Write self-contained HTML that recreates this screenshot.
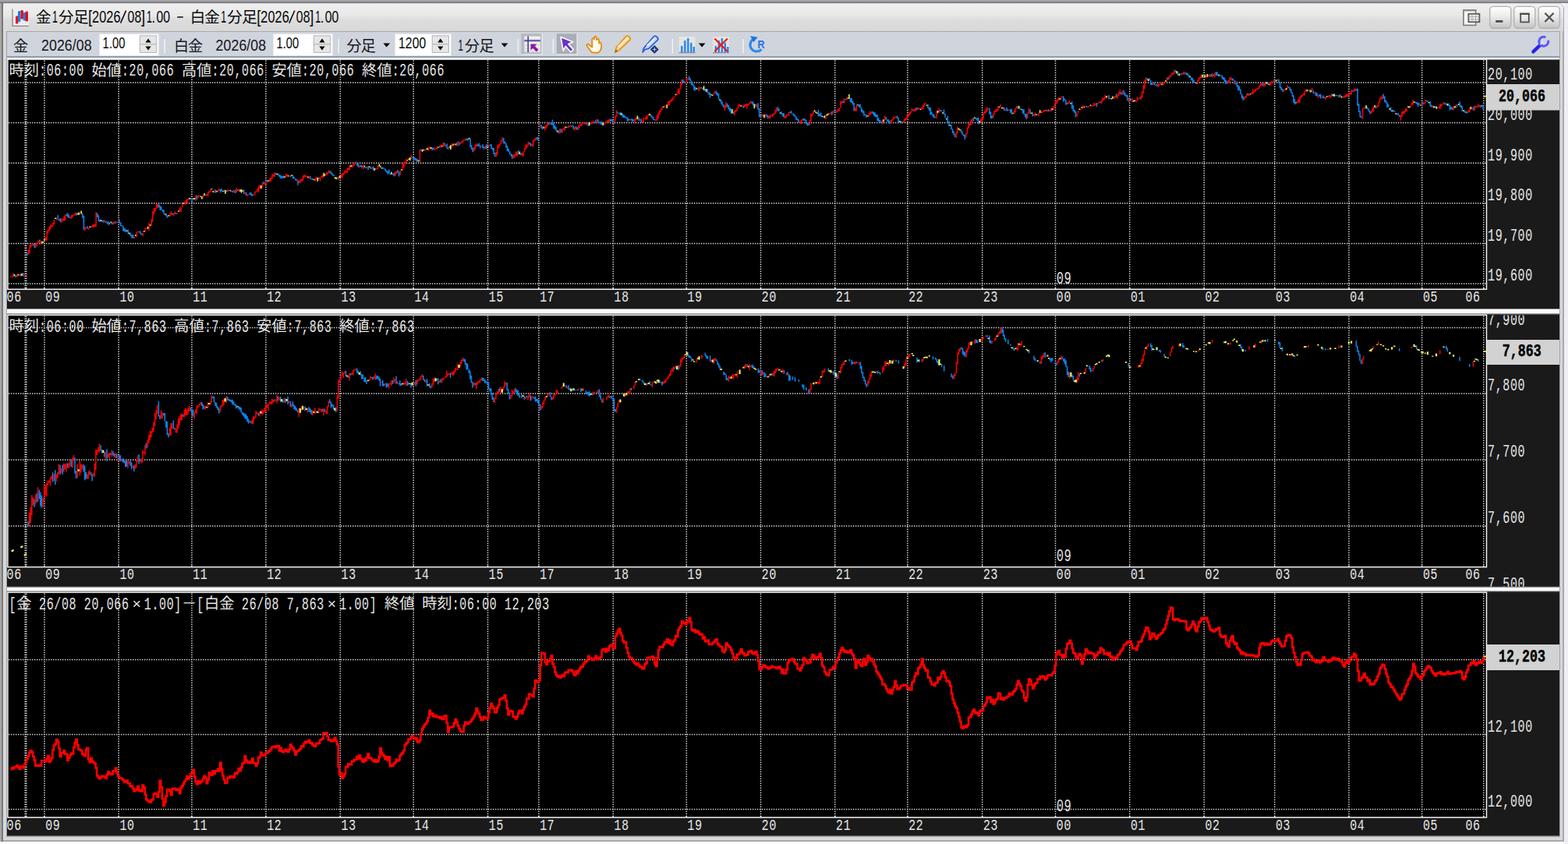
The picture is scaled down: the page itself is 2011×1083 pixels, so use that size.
<!DOCTYPE html>
<html lang="ja"><head><meta charset="utf-8"><title>金1分足[2026/08]1.00 - 白金1分足[2026/08]1.00</title>
<style>
html,body{margin:0;padding:0}
body{width:2011px;height:1083px;position:relative;overflow:hidden;background:#fff;font-family:"Liberation Sans",sans-serif}
div{position:absolute;box-sizing:border-box}
#outer{left:2006px;top:4px;width:5px;height:1079px;background:#eeeef4}
#topband{left:0;top:0;width:2011px;height:4px;background:linear-gradient(#a3a3aa 0,#a3a3aa 52%,#7c7c80 68%,#767678 100%)}
#win{left:0;top:4px;width:2006px;height:1076px;background:#d8d8d8;border-radius:0 7px 0 0;border-right:2px solid #a9a9a9;border-bottom:2px solid #a9a9a9;border-top:0}
#lb0{left:0;top:4px;width:2px;height:1076px;background:#a8a8a8}
#lb1{left:2px;top:3px;width:2px;height:1077px;background:#787878}
#lb2{left:7.500px;top:40px;width:1.500px;height:1034px;background:#a4a4a4}
#rb2{left:1999.500px;top:40px;width:1.600px;height:1034px;background:#a4a4a4}
#bb2{left:8px;top:1072.600px;width:1993px;height:1.600px;background:#a4a4a4}
#title{left:3.500px;top:4.500px;width:2001px;height:35px;background:linear-gradient(#efefef 0,#e8e8e8 42%,#dddddd 58%,#d8d8d8 100%);border-radius:4px 5px 0 0}
#tline{left:8px;top:39.600px;width:1993px;height:1.400px;background:#a8a8a8}
#tool{left:9px;top:41px;width:1991px;height:31.400px;background:#d0d4dc}
#tool2{left:9px;top:72.400px;width:1991px;height:1.800px;background:#8e9cb0}
.gap{left:9px;width:1991px;background:#fafafa;border-top:0.600px solid #9a9a9a;border-bottom:1.100px solid #9c9c9c}
</style></head><body>
<div id="outer"></div>
<div id="win"></div><div id="topband"></div><div id="lb0"></div><div id="lb1"></div>
<div id="title"></div><div id="tline"></div><div id="tool"></div><div id="tool2"></div>
<div id="lb2"></div><div id="rb2"></div><div id="bb2"></div>
<div class="gap" style="top:395.800px;height:7.500px"></div><div class="gap" style="top:752.600px;height:6.800px"></div>
<svg width="2011" height="1083" viewBox="0 0 2011 1083" style="position:absolute;left:0;top:0" role="img"><desc>時刻:06:00 始値:20,066 高値:20,066 安値:20,066 終値:20,066 / 時刻:06:00 始値:7,863 高値:7,863 安値:7,863 終値:7,863 / [金 26/08 20,066×1.00]－[白金 26/08 7,863×1.00] 終値 時刻:06:00 12,203</desc><rect x="9" y="75.2" width="1991" height="320.8" fill="#1a1a1a"/><rect x="9" y="74.200" width="1991" height="2.300" fill="#f6f6f6"/><rect x="9.900" y="76.1" width="1896.6" height="295.1" fill="#000" stroke="#f2f2f2" stroke-width="1.500"/><rect x="9" y="403.3" width="1991" height="349.5" fill="#1a1a1a"/><rect x="9.900" y="404.2" width="1896.6" height="323.4" fill="#000" stroke="#f2f2f2" stroke-width="1.500"/><rect x="9" y="759.2" width="1991" height="313.4" fill="#1a1a1a"/><rect x="9.900" y="760.1" width="1896.6" height="288.8" fill="#000" stroke="#f2f2f2" stroke-width="1.500"/><path d="M57 77.4V371M152.2 77.4V371M246 77.4V371M341 77.4V371M436.4 77.4V371M530.3 77.4V371M625.6 77.4V371M691 77.4V371M786.4 77.4V371M880.4 77.4V371M975.6 77.4V371M1070.9 77.4V371M1164 77.4V371M1259.8 77.4V371M1353.6 77.4V371M1448.8 77.4V371M1544.3 77.4V371M1634.8 77.4V371M1730 77.4V371M1823.7 77.4V371M1902.8 77.4V371M32.2 77.4V371M33.8 77.4V371M11 106H1906M11 157.6H1906M11 209.2H1906M11 260.8H1906M11 312.4H1906M11 364H1906M57 405.5V727.4M152.2 405.5V727.4M246 405.5V727.4M341 405.5V727.4M436.4 405.5V727.4M530.3 405.5V727.4M625.6 405.5V727.4M691 405.5V727.4M786.4 405.5V727.4M880.4 405.5V727.4M975.6 405.5V727.4M1070.9 405.5V727.4M1164 405.5V727.4M1259.8 405.5V727.4M1353.6 405.5V727.4M1448.8 405.5V727.4M1544.3 405.5V727.4M1634.8 405.5V727.4M1730 405.5V727.4M1823.7 405.5V727.4M1902.8 405.5V727.4M32.2 405.5V727.4M33.8 405.5V727.4M11 420.5H1906M11 505H1906M11 590H1906M11 675H1906M57 761.4V1048.7M152.2 761.4V1048.7M246 761.4V1048.7M341 761.4V1048.7M436.4 761.4V1048.7M530.3 761.4V1048.7M625.6 761.4V1048.7M691 761.4V1048.7M786.4 761.4V1048.7M880.4 761.4V1048.7M975.6 761.4V1048.7M1070.9 761.4V1048.7M1164 761.4V1048.7M1259.8 761.4V1048.7M1353.6 761.4V1048.7M1448.8 761.4V1048.7M1544.3 761.4V1048.7M1634.8 761.4V1048.7M1730 761.4V1048.7M1823.7 761.4V1048.7M1902.8 761.4V1048.7M32.2 761.4V1048.7M33.8 761.4V1048.7M11 846.4H1906M11 942.5H1906M11 1038.6H1906" stroke="#cdcdcd" stroke-width="1.500" stroke-dasharray="1.500 1.500" fill="none"/><path d="M57 369v2M152.2 369v2M246 369v2M341 369v2M436.4 369v2M530.3 369v2M625.6 369v2M691 369v2M786.4 369v2M880.4 369v2M975.6 369v2M1070.9 369v2M1164 369v2M1259.8 369v2M1353.6 369v2M1448.8 369v2M1544.3 369v2M1634.8 369v2M1730 369v2M1823.7 369v2M1902.8 369v2M33 369v2" stroke="#f2f2f2" stroke-width="1.300"/><path d="M57 725.4v2M152.2 725.4v2M246 725.4v2M341 725.4v2M436.4 725.4v2M530.3 725.4v2M625.6 725.4v2M691 725.4v2M786.4 725.4v2M880.4 725.4v2M975.6 725.4v2M1070.9 725.4v2M1164 725.4v2M1259.8 725.4v2M1353.6 725.4v2M1448.8 725.4v2M1544.3 725.4v2M1634.8 725.4v2M1730 725.4v2M1823.7 725.4v2M1902.8 725.4v2M33 725.4v2" stroke="#f2f2f2" stroke-width="1.300"/><path d="M57 1046.7v2M152.2 1046.7v2M246 1046.7v2M341 1046.7v2M436.4 1046.7v2M530.3 1046.7v2M625.6 1046.7v2M691 1046.7v2M786.4 1046.7v2M880.4 1046.7v2M975.6 1046.7v2M1070.9 1046.7v2M1164 1046.7v2M1259.8 1046.7v2M1353.6 1046.7v2M1448.8 1046.7v2M1544.3 1046.7v2M1634.8 1046.7v2M1730 1046.7v2M1823.7 1046.7v2M1902.8 1046.7v2M33 1046.7v2" stroke="#f2f2f2" stroke-width="1.300"/><path d="M19.99 352.76v3.13M26.31 351.46v3.08M29.46 350.31v4.01M34.81 324.74v3.37M42.7 313.34v1.42M44.28 313.12v4.94M50.6 307.56v3.3M74.28 275.92v5.9M75.86 281.23v1.75M77.44 279.98v5.03M85.34 274.65v2.72M86.92 273.29v5.54M88.49 275.82v4.22M97.97 272.83v3.57M105.86 273.77v5.9M107.44 276.71v18.17M112.18 290.24v3.5M116.92 290v1.68M124.81 273.56v5.27M126.39 276.13v7.86M127.97 281.59v3.74M131.13 282.67v1.98M132.71 282.56v3.01M135.86 283.83v1.44M137.44 284.28v2.69M139.02 284.23v4.52M143.76 284.7v3.37M146.92 284.42v2.68M150.08 284.81v1.3M153.23 281.53v5.12M154.81 285.23v4.96M156.39 289.1v1.3M157.97 289.75v6.67M159.55 292.47v4.48M161.13 293.81v4.33M164.29 294.53v5.61M167.44 298.64v4.68M169.02 301.58v3.9M170.6 301.04v4.92M178.5 296.89v1.3M180.08 296.48v4.11M181.66 299.54v2.26M203.76 261.84v4.45M205.34 263.72v6.25M206.92 265.37v4.05M208.5 269.04v2.53M210.08 269.23v5.26M213.24 273.84v3.81M214.81 276.29v3.51M221.13 273.13v2.55M225.87 273.22v1.88M244.82 254.03v2.02M246.39 255.35v5.95M252.71 250.68v5.12M263.76 249.5v1.53M271.66 241.36v2.53M276.4 243.3v4.29M282.71 242.64v4.59M284.29 241.99v3.33M287.45 243.75v2.28M290.61 244.19v2.27M296.92 244.62v1.3M298.5 245.09v1.83M301.66 243.69v4.25M304.82 242.88v2.1M312.71 243.34v5.69M315.87 246.76v4.31M320.61 246.87v3M322.19 247.36v3.82M323.77 249.01v2.67M337.98 232.93v3.49M342.71 231v2.67M353.77 221.65v2.4M356.92 222.49v3.04M358.5 224.02v3.22M360.08 225.09v3.86M361.66 225.99v2.9M363.24 225.27v3.38M372.71 225.27v2M375.87 225.28v4.19M377.45 227.26v2.07M379.03 228.97v3.03M382.19 231.27v6.3M397.98 226.02v3.66M399.56 229.03v1.3M401.14 228.73v2.38M409.03 227.66v1.93M423.24 219.24v3.18M424.82 220.47v3.11M426.4 222.18v3.15M427.98 223.95v2.27M432.72 227.31v2.15M457.98 208.13v4.71M459.56 210.05v4.34M462.72 211.43v2.81M464.3 212.76v2.19M469.03 213.92v2.25M472.19 212.93v5.41M475.35 214.06v2.81M478.51 213.15v4.31M481.67 216.04v1.88M491.14 214.59v2.2M492.72 215.95v1.63M494.3 216.46v3.55M495.88 218.58v2.96M497.46 219.33v4.72M499.03 217.55v4.83M500.61 221.72v2.45M503.77 223.03v1.3M505.35 221.87v4.34M510.09 217.93v4.18M511.67 220.42v5.96M529.04 201.82v1.3M530.61 201.68v3.97M532.19 202.21v3.18M533.77 203.31v3.89M535.35 203.93v3.72M540.09 191.43v2.08M554.3 189.29v3.78M555.88 189.29v2.74M563.77 187v2.17M570.09 183.37v4.12M573.25 184.35v6.32M574.83 189.62v2.11M585.88 182.69v4.41M589.04 182.34v3.88M598.51 177.82v2.08M600.09 177.62v3.18M603.25 177.61v11.72M604.83 186.35v5.69M606.41 189.73v5.59M612.72 185.29v2.53M614.3 183.46v4.3M615.88 186.39v4.09M619.04 185.24v4.69M620.62 188.02v3.51M623.78 185.28v6.14M628.51 185.6v1.3M630.09 184.9v6.13M631.67 189.22v3.46M633.25 190.1v8.01M634.83 195.9v5.46M645.88 176.65v7.27M647.46 181.43v3.14M649.04 183.53v5.85M650.62 186.92v6.94M652.2 190.77v4.1M653.78 194.23v3.7M655.36 197.36v3.1M656.93 197.96v5.71M664.83 192.65v5.63M667.99 196.59v2.55M679.04 182.82v2.7M680.62 183.81v3.86M688.51 176.04v3.3M690.09 175.97v4.3M694.27 160.03v4.6M695.85 161.9v4.43M703.74 157.1v3.12M706.9 157.38v2.59M708.48 153.54v6.84M710.06 158.07v7.19M711.64 160.58v5.25M713.22 162.99v5.14M716.38 167.59v3.44M719.53 165.3v4.78M727.43 162.44v1.3M733.74 160.86v1.71M735.32 161.2v4.18M738.48 162.15v3.37M740.06 163.14v3.52M751.11 156.85v2.77M754.27 157.36v4.46M762.17 156.7v1.3M763.75 154.17v3.84M766.9 153.15v4.67M768.48 156.56v1.3M770.06 156.28v3.53M771.64 155.52v4.6M782.69 153.04v2.76M784.27 152.83v2.55M785.85 154.12v4.51M792.17 143.37v2.16M793.75 145.07v1.3M795.33 143.7v4.31M798.48 145.48v5.09M800.06 147.3v3.86M801.64 148.5v2.82M803.22 150.04v1.84M804.8 150.6v5.41M806.38 152.34v2.15M809.54 152.4v2.03M811.12 152.53v4.13M812.69 153.17v2.11M819.01 150.2v4.82M822.17 152.41v4.37M834.8 147.23v2.66M836.38 148.48v3.15M837.96 150.25v3.77M839.54 153.07v1.3M875.85 101.74v3.67M877.43 103.75v3.05M883.75 97.67v4.72M885.33 100.52v3.75M886.91 103.61v5.75M888.49 106.92v3.36M890.07 109.34v6.33M891.64 111.13v5.22M894.8 113.19v2.02M899.54 112.09v1.42M901.12 112.38v2.33M904.28 113.78v3.1M907.43 114.18v4.96M909.01 118.32v3.2M910.59 118.69v6.87M918.49 116.48v4.66M920.07 118.84v3.91M921.65 120.25v7.56M924.8 128.07v4.64M926.38 130.43v5.18M927.96 133.97v4.16M932.7 132.84v4.33M934.28 135.11v5.27M935.86 137.86v5.26M937.44 139.04v6.66M940.59 142.86v3.02M953.23 135.38v3.01M964.28 130.23v3.06M965.86 130.51v5.03M969.02 133.87v2.93M972.17 132.23v8.45M973.75 138.94v10.96M975.33 147.63v2.93M978.49 147.35v1.91M983.23 146.58v3.14M984.81 147.68v4.45M997.44 137.37v4.94M999.02 139.36v3.45M1002.17 143.33v3.62M1003.75 145.34v3.8M1005.33 145.27v5.26M1013.23 143.23v1.78M1014.81 142.31v3.32M1016.39 145.43v1.3M1017.96 145.77v3.02M1019.54 147.36v3.11M1021.12 149.56v4.52M1022.7 152.08v2.53M1024.28 153.15v4.71M1030.6 152v2.61M1032.18 152.32v2.9M1033.75 153.84v5.5M1035.33 157.07v4M1036.91 157.88v2.75M1049.54 140.98v8.3M1051.12 145.67v3.57M1052.7 144.41v5.05M1055.86 148.88v2.18M1066.91 143.04v4.78M1070.07 141.94v1.53M1071.65 142.82v2.03M1081.12 129.53v2.37M1084.28 127.04v1.3M1090.6 125.49v5.48M1092.18 125.91v5.97M1093.76 129.41v5.15M1095.34 132.08v10.47M1101.65 134.18v3.39M1103.23 133.54v4.87M1104.81 137.72v6.13M1106.39 140.84v4.25M1107.97 142.48v6.39M1109.55 146.65v1.61M1111.13 146.93v4.08M1119.02 142.66v3.22M1120.6 143.83v4.46M1122.18 144.21v5.89M1123.76 146.61v3.51M1125.34 147.23v7.65M1126.92 151.45v4.58M1128.49 153.99v4.09M1130.07 155.67v2.39M1136.39 150.01v3.74M1137.97 153.24v2.73M1139.55 153.23v4.43M1141.13 155.01v3.91M1150.6 148.38v3.81M1152.18 150.87v6.03M1155.34 154.92v3.37M1156.92 156.18v2.19M1171.13 140.41v1.78M1175.86 138.12v3.4M1190.08 133.72v5.45M1191.65 137.87v4.16M1193.23 138.1v9.14M1194.81 143.17v4.02M1196.39 146.22v3.53M1197.97 146.73v4.66M1199.55 149.83v1.44M1205.87 141.15v1.94M1207.44 141.55v1.34M1210.6 140.58v6.17M1212.18 145.63v5.39M1215.34 148.82v9.14M1216.92 155.55v6.34M1220.08 160.35v5.89M1221.66 165.25v5.47M1223.23 168.61v4.68M1224.81 171.63v4.26M1232.71 166.45v3.82M1234.29 168.83v4.16M1235.87 172.15v2.49M1237.45 172.96v5.96M1248.5 151.01v4.2M1251.66 150.63v2.55M1253.24 151.56v3.19M1254.81 150.8v8.56M1269.03 138.71v7.9M1270.6 143.15v8.83M1272.18 148.42v3.66M1287.97 138.06v3.98M1291.13 137.63v4.97M1292.71 140.24v2.01M1295.87 139.92v4.89M1297.45 139.83v6.61M1305.34 136.1v3.63M1308.5 138.54v1.86M1311.66 140.01v5.44M1313.24 140.59v5.82M1314.82 145.7v4.77M1316.4 145.95v7.02M1321.13 140.34v5.45M1324.29 143.71v5.5M1330.61 146.51v1.3M1341.66 140.92v2.05M1344.82 140.18v3.16M1363.77 123.46v7.13M1365.34 126.36v2.27M1366.92 128.12v6.55M1368.5 131.62v2.07M1374.82 130.18v9.24M1376.4 135.23v7.65M1377.98 140.85v3.96M1379.56 142.4v7.78M1393.77 136.01v1.99M1406.4 132.05v4.9M1411.14 130.46v1.69M1422.19 121.95v5.26M1423.77 125.7v1.3M1431.66 120.61v4.46M1437.98 118.02v3.41M1441.14 115.45v5.75M1442.72 118.81v4.11M1444.29 121.39v2.94M1445.87 121.87v7.37M1449.03 126.16v3.82M1450.61 126.61v2.24M1461.66 125.05v1.81M1471.14 99.91v2.8M1474.3 100.17v3.4M1475.87 103.12v5.87M1477.45 106.2v3.11M1480.61 105.6v3.68M1482.19 108.43v1.32M1483.77 107.79v2.94M1497.98 98.94v3.55M1507.45 90.03v2.76M1510.61 91.87v4.89M1513.77 94.18v2.2M1518.51 92.54v3.01M1521.67 92.96v3.24M1523.24 93.98v3M1524.82 95.73v3.95M1527.98 99.16v4.19M1529.56 99.91v5.9M1531.14 102.58v3.78M1532.72 105.18v1.74M1543.77 95.54v2.59M1550.09 96.45v1.6M1553.25 94.95v3.6M1556.4 95.45v2.35M1559.56 92.05v4.84M1561.14 92.43v4.43M1564.3 95.59v2.36M1565.88 96.44v1.39M1567.46 96.65v4.57M1569.04 98.73v3.86M1570.61 99.8v5.12M1572.19 102.39v5.57M1573.77 104.54v2.2M1580.09 100.35v3.03M1581.67 101.36v2.03M1583.25 103.14v4.52M1586.4 105.48v5.93M1587.98 109.19v6.59M1589.56 110.45v5.69M1591.14 114.65v6.48M1592.72 120.48v5.75M1594.3 123.29v5.58M1600.62 119.45v3.05M1619.56 105.9v4.58M1625.88 105.61v2.87M1635.35 102.28v2.87M1640.09 101.72v4.87M1641.67 104.96v8.61M1643.25 111.6v4.14M1644.83 113.81v4.26M1652.72 110.93v1.9M1654.3 112.09v4.17M1655.88 114.25v5M1657.46 118.35v5.86M1659.04 122.23v9.65M1660.62 127.53v6.71M1679.57 115.15v2.78M1684.3 116.01v3.92M1687.46 118v5.21M1689.04 119.14v4.26M1692.2 120.94v2.95M1693.78 120.64v5.9M1696.93 122.29v3.85M1698.51 124.28v1.55M1707.99 120.02v3.86M1712.72 121.81v1.4M1714.3 121.94v1.37M1717.46 121.66v3.47M1719.04 121.28v3.33M1734.83 116v1.53M1739.57 113.88v2.56M1741.15 113.87v22.19M1742.73 133.33v10.33M1744.3 142.27v8.13M1745.88 149.02v2.23M1753.78 137.4v2.97M1755.36 139.16v3.97M1756.94 141.99v4.19M1764.83 136.82v2.11M1774.31 120.57v5.95M1775.88 123.6v7.58M1777.46 128.55v3.83M1779.04 131.25v6.39M1780.62 133.97v3.82M1783.78 137.45v4.97M1786.94 141.11v2.25M1788.52 141.95v1.75M1791.67 145.84v1.3M1793.25 144.65v3M1794.83 147.29v2.66M1815.36 130.82v1.6M1816.94 130.95v2.83M1818.52 131.58v5.47M1820.1 132.22v2.65M1824.83 130.58v3.31M1829.57 128.41v1.71M1831.15 129.27v2.28M1834.31 130.11v6.71M1835.89 134.56v2.89M1840.62 135.96v2.38M1843.78 137.49v1.3M1853.26 131.5v2.86M1854.83 132.88v1.63M1857.99 132.71v3.56M1859.57 134.76v6.87M1861.15 137.08v3.07M1862.73 137.59v3.73M1869.05 134.54v2.04M1872.2 130.2v6.49M1873.78 134.84v3.4M1875.36 136.05v6.89M1878.52 141.47v3.35M1880.1 142.97v1.95M1881.68 143.1v2.56M1889.57 137.16v4.58M1892.73 136.48v1.74M1899.05 134.69v3.22M1902.2 134.67v6.07" stroke="#0a84f0" stroke-width="1.550" fill="none"/><path d="M13.67 354.48v1.3M15.25 354.16v1.3M16.83 351.1v4.69M21.57 352.19v3.61M24.73 350.95v3.06M31.04 350.48v4.78M36.39 320.2v6.65M37.97 314.5v10.86M39.55 314.07v3.43M41.12 311.45v3.66M45.86 311.16v6.7M47.44 311.14v4.37M49.02 308.34v3.65M52.18 308.6v4.96M58.49 304.31v4.17M60.07 296.36v12.3M61.65 294.6v5.19M63.23 290.62v5.55M64.81 288.37v6.04M66.39 289.12v2.37M67.97 285.6v4.88M69.55 281.21v6.72M72.7 279.37v2.99M79.02 280.27v5.83M80.6 280.81v2.84M82.18 277.26v5.89M83.76 274.92v7.72M90.07 278.24v1.65M91.65 275.77v5.07M93.23 275.58v3.19M94.81 275.07v1.79M96.39 273.36v2.82M102.71 272.22v2.65M109.02 290.88v5.13M110.6 291.2v1.57M113.76 292.3v2.32M118.5 288.65v3.13M120.07 287.51v4.28M121.65 287.47v3.87M123.23 272.04v18.64M134.29 282.13v3.67M145.34 284.6v3.75M148.5 283.54v3.26M151.65 283.59v1.64M172.18 303.87v2.19M175.34 297.53v6.65M176.92 296.43v2.03M183.23 298.72v4.24M186.39 292.06v5.19M187.97 292.7v1.3M191.13 285.96v10M194.29 281.16v8.19M195.87 270.97v13.76M197.45 266.88v8.38M199.02 266.9v4.48M200.6 261.25v6.83M202.18 261.72v4.92M217.97 273.52v4.24M219.55 271.37v4.64M222.71 273.83v3.37M224.29 271.03v3.78M227.45 273.1v1.65M230.6 266.04v5.57M232.18 266.03v5.68M233.76 261.17v4.95M236.92 258.46v3.28M238.5 256.55v5.97M240.08 255.16v4.85M241.66 254.18v2.36M251.13 250.2v7.56M254.29 250.43v3.5M255.87 250.74v1.3M260.61 249.79v3.34M265.34 248.92v2.66M266.92 245.68v6.43M268.5 244.64v2.91M270.08 242.3v3.79M274.82 244.01v3.4M279.55 243.76v2.7M281.13 241.81v2.89M292.19 242.76v3.57M293.76 243.88v1.41M300.08 243.52v3.37M303.24 240.64v6.33M306.4 242.13v3.7M314.29 246.79v2.55M317.45 249.31v2.64M319.03 248.78v1.3M325.34 249.31v1.47M326.92 245.78v4.67M328.5 244.67v2.13M330.08 241.84v3.79M331.66 238.62v8.58M333.24 237.42v4.38M336.4 234.51v6.5M339.56 233.99v2.75M341.13 231.7v5.22M345.87 228.73v4.83M347.45 227.68v4.96M349.03 223.24v6.8M350.61 223.56v3.31M352.19 221.17v5.82M366.4 223.33v4.58M367.98 223.42v2.8M371.14 225.32v1.3M380.61 229.24v3.4M383.77 232.17v2.47M385.35 230.16v4.51M386.93 229.44v3.26M388.5 225.37v6.54M390.08 224.32v4.22M391.66 224.53v2.7M393.24 225.38v1.3M396.4 225.77v3.46M404.29 228.48v3.69M405.87 226.6v4.61M410.61 227.55v4.61M412.19 225.54v2.25M413.77 223.86v4.77M418.51 221.22v3.64M420.08 220.81v3.27M421.66 218.34v4.27M434.3 226.31v4.67M437.45 223.71v3.82M439.03 222.56v5.78M440.61 221.28v3.66M442.19 218.43v4.6M443.77 219.03v2.13M445.35 215.8v6.2M446.93 214.87v3.5M448.51 212.11v6.17M451.66 211.29v3.62M453.24 211.37v2.08M454.82 208.43v3.9M456.4 207.2v2.27M461.14 211.99v2.94M465.88 211.48v5.45M470.61 213.67v2.43M476.93 214.21v2.68M483.24 215.47v1.69M484.82 212.3v4.57M506.93 220.21v5.47M508.51 219.55v3.59M513.25 218.89v5.82M516.4 210.48v8.75M517.98 207.39v7.82M519.56 207.31v4.16M521.14 203.64v5.4M527.46 198.82v5.36M538.51 191.82v15.95M544.83 191.63v1.7M546.4 190.69v1.76M549.56 188.86v4.38M551.14 188.37v2.67M557.46 189.84v3.21M559.04 189.71v1.3M560.62 187.41v4.44M565.35 185.52v4.3M568.51 182.44v6.37M571.67 185.49v3.09M579.56 183.87v5.51M582.72 183.49v3.23M587.46 181.06v6.77M590.62 182.87v1.56M592.2 181.01v2.77M593.77 179.15v3.74M595.35 179.07v1.3M596.93 177.75v2.77M607.99 188.84v5.27M609.56 185.52v6.47M611.14 183.63v4.55M617.46 186.78v1.3M622.2 187.4v3.23M626.93 185.71v3.19M636.41 194.9v6.39M637.99 185.96v12.86M639.57 185.3v4.79M641.14 184.09v2.99M642.72 179.71v5.04M644.3 176.44v5.13M658.51 198.68v4.69M660.09 197.41v4.86M661.67 194.76v5.25M663.25 194.38v6.26M669.57 196.06v4.11M671.15 194.24v6.35M672.72 190.12v4.6M674.3 185.36v6.27M675.88 185.59v4.08M677.46 181.54v5.27M682.2 184.44v3.22M683.78 179.94v8.13M685.36 178.1v3.78M686.94 176.34v3.98M692.69 160.07v3.54M699.01 161.5v6.03M700.59 160.24v4.81M702.16 157.19v4.9M705.32 156.71v3.14M717.95 165.34v6.23M721.11 165.58v4.72M722.69 164.24v2.17M724.27 161.96v6.04M729.01 161.23v2.48M730.59 161.3v1.71M732.17 160.79v1.64M736.9 162.77v4.9M741.64 161.5v5.57M743.22 159.82v4.31M744.8 159.25v2.61M746.38 157.14v4.05M747.96 156.97v2.11M749.53 157.05v2.49M752.69 156.69v3.49M757.43 158.1v1.3M759.01 156.29v2.95M760.59 154.67v3.8M765.32 153.1v5.8M774.8 157.87v2.74M776.38 156.58v1.92M777.96 154.49v2.82M779.54 154.04v2.46M781.11 152.85v4.13M787.43 154.82v4.59M789.01 148.55v7.27M790.59 141.61v8.4M807.96 152.47v2.34M814.27 152.5v5.41M815.85 150.9v3.55M820.59 152.21v3.11M823.75 154.74v3.09M825.33 150.96v5.96M826.91 151.43v1.3M828.48 149.32v4.53M830.06 148.22v4.95M831.64 145.89v3.47M841.12 152.85v2.73M842.7 147.46v7.03M844.27 144.22v8.27M845.85 141.68v5.55M847.43 139.83v3.89M849.01 137.72v3.61M852.17 135.68v2.48M853.75 135.12v1.39M856.91 130.07v5.37M858.49 129.25v5.72M860.06 128.29v3.05M861.64 126.84v3.14M863.22 124.58v3.94M864.8 123.53v1.83M867.96 119.27v3.33M869.54 114.58v5.49M871.12 113.44v7.59M872.7 107.66v7.06M874.28 102.11v7.42M879.01 104.69v2.08M880.59 100.18v5.7M882.17 100.63v1.3M896.38 111.29v5.77M897.96 111.6v2.96M915.33 119.21v2.65M916.91 116.66v3.15M929.54 134.85v7.27M931.12 131.21v7.23M942.17 142.06v5.9M943.75 140.83v3.17M945.33 137.95v3.94M946.91 133.94v5.13M948.49 133.43v2.91M951.65 134.35v2.35M954.8 134.18v3.54M956.38 133.45v2.53M957.96 133.06v6.39M959.54 133.3v2.62M961.12 131.4v2.95M962.7 129.48v3.09M970.59 133.81v4.27M976.91 145.83v3.79M981.65 146.35v4.4M986.38 148.23v3.49M987.96 147.25v4.83M989.54 147.7v1.3M991.12 146.33v3.63M992.7 144.82v3.05M994.28 141v5.32M995.86 137.65v6.1M1006.91 148.42v3.53M1008.49 146.81v4.23M1010.07 146.79v1.37M1011.65 143.68v5.08M1025.86 155.67v2.91M1027.44 153.91v5M1029.02 152.11v3.05M1038.49 154.29v6.89M1040.07 145.6v10.07M1041.65 145.73v3.84M1043.23 142.08v4.52M1059.02 147.82v4.88M1063.76 145.25v1.85M1065.33 144.2v2.25M1068.49 142.27v3.6M1073.23 141.61v3.08M1074.81 139.45v3.52M1076.39 138.35v4.48M1077.97 130.32v8.17M1079.55 129.39v4.05M1082.7 126.28v6.15M1085.86 124.94v3.57M1096.91 138.31v4.46M1098.49 134.16v8.28M1114.28 145.18v4.51M1115.86 142.63v5.22M1117.44 143.33v2.66M1131.65 153.45v6.28M1134.81 148.48v5.9M1142.71 154.2v4.86M1144.28 152.49v3.47M1145.86 149.83v3.68M1147.44 150.2v1.92M1149.02 148.85v2.08M1158.5 154.67v3.43M1160.07 152.05v4.61M1161.65 151.7v2.65M1163.23 147.66v5.94M1164.81 145.73v4.72M1166.39 144.06v4.42M1167.97 142.9v2.75M1169.55 138.63v4.94M1172.71 139.94v3.48M1174.29 137.73v4.87M1177.44 137.85v2.81M1179.02 138.58v1.68M1182.18 137.75v2.53M1183.76 134.96v5.43M1185.34 132.7v4.64M1186.92 132.11v1.8M1201.13 142v9.73M1204.29 138.82v5.37M1226.39 169.57v7.63M1227.97 162.79v8.79M1239.02 170.55v5.68M1240.6 163.25v8.35M1242.18 158.12v6.93M1243.76 158.3v3.28M1245.34 153.74v7.1M1246.92 151.9v5.37M1257.97 152.03v5.85M1259.55 149.37v7.35M1261.13 144.39v8.44M1262.71 142.61v3.51M1264.29 139.93v5.17M1265.87 137.34v6.08M1267.45 139.05v1.34M1273.76 145.8v5.36M1275.34 142v5.19M1276.92 140.15v3.74M1278.5 139.92v3.36M1280.08 136v6.09M1283.24 133.92v3.32M1289.55 139.92v2.46M1294.29 140.92v1.3M1300.61 141.73v4.09M1302.18 138.42v6.02M1303.76 136.11v3.45M1317.97 144.17v7.35M1319.55 138.66v6.73M1325.87 146.39v2.59M1327.45 144.5v4.64M1332.19 144.68v4.42M1335.34 142.55v2.62M1336.92 143.33v1.65M1338.5 141.51v2.61M1340.08 140.41v2.53M1343.24 140.63v2.46M1346.4 141.49v1.39M1347.98 138.65v4.29M1351.13 135.91v4.97M1352.71 132.12v5.83M1354.29 129.01v4.71M1355.87 127.33v5.32M1357.45 124.64v4.79M1360.61 125.08v3.21M1362.19 123.37v1.92M1370.08 130.65v3.42M1371.66 129v3.28M1381.13 144.96v5M1382.71 142.32v2.93M1385.87 139.04v2.25M1389.03 135.18v3.8M1392.19 135.79v1.3M1395.35 135.99v1.48M1396.92 136.27v1.3M1400.08 134.95v1.88M1401.66 134.64v1.4M1403.24 131.8v5.05M1404.82 132.75v2.21M1407.98 131.67v2.2M1409.56 129.88v1.95M1412.71 128.67v4.53M1414.29 125.21v4.91M1415.87 125.55v2.4M1417.45 121.78v5.53M1420.61 123.49v1.76M1428.5 124.1v2.77M1430.08 123.34v2.67M1433.24 121.25v5.5M1434.82 118.19v5.2M1436.4 114.81v6.29M1439.56 116.62v5.28M1447.45 124.73v6.39M1452.19 126.09v4.86M1456.93 128.71v2.31M1458.51 124.31v5.12M1460.08 126.19v1.61M1463.24 122.55v5.34M1464.82 116.89v8.74M1466.4 108.97v10.91M1467.98 102.42v11.87M1469.56 99.49v5.72M1479.03 106.06v2.76M1485.35 107.09v5.07M1486.93 108.12v2.21M1488.51 106.15v2.27M1491.66 105.66v3.71M1493.24 104.72v2.62M1496.4 99.86v4.7M1499.56 96.92v4.53M1501.14 96.14v2.95M1502.72 94.35v2.81M1504.3 93v3.05M1505.88 89.23v5.71M1515.35 94.06v2.41M1516.93 92.98v2.31M1520.09 92.62v2.9M1535.88 102.47v5.84M1537.46 99.58v4.78M1539.03 98.56v3.25M1540.61 95.48v4.47M1546.93 95.28v5.02M1551.67 94.64v4.38M1554.82 93.83v5.31M1557.98 93.39v5.64M1575.35 102.92v4.44M1576.93 99.49v5.68M1578.51 98.4v3.93M1584.83 103.52v5.57M1595.88 124.4v3.39M1597.46 122.91v3.02M1599.04 120.12v4.27M1602.19 120.16v3.22M1605.35 118.19v2.63M1606.93 114.3v6.61M1608.51 116.1v2.68M1610.09 113.91v3.72M1611.67 113.52v1.96M1613.25 112.45v2.5M1614.83 109.71v4.08M1616.41 107.8v3.43M1617.98 106.01v4.08M1621.14 106.42v4.99M1622.72 105.84v4.08M1629.04 105.29v4.91M1630.62 104.5v2.54M1632.2 104.55v1.83M1633.77 101.88v3.78M1638.51 101.56v2.3M1646.41 114.7v3.12M1647.99 114.17v1.47M1651.14 109.1v5.39M1663.78 129.14v2.73M1665.35 126.78v5.03M1666.93 123.87v7.79M1668.51 121.89v4.27M1670.09 121.85v2.48M1671.67 119.67v3.18M1673.25 116.98v5.57M1674.83 114.35v3.45M1677.99 114.65v2M1682.72 112.75v4.86M1685.88 118.59v2.01M1690.62 121.48v4.51M1695.36 123.97v1.3M1700.09 124.35v3.9M1703.25 122.4v2.57M1704.83 121.95v2.52M1706.41 122.35v3.62M1715.88 121.68v1.95M1722.2 123.92v1.3M1723.78 122.69v2.84M1725.36 121.66v3.29M1726.94 120.29v3.97M1728.51 120.2v3.73M1730.09 120.24v1.3M1731.67 118.7v3.09M1733.25 115.31v5.9M1736.41 114.26v3.92M1737.99 113.36v3.64M1747.46 139.32v13.55M1749.04 138.61v1.66M1750.62 137.3v1.99M1758.52 142.62v3.21M1760.09 138.88v5.6M1761.67 136.54v6.37M1766.41 134.99v2.77M1767.99 130.93v5.81M1769.57 125.7v6.1M1771.15 124.17v2.97M1772.73 122.26v5.51M1796.41 147.51v6.94M1797.99 143.2v6.97M1799.57 142.84v3.74M1801.15 141.77v4.14M1802.73 138.87v4.85M1804.31 139.4v3.08M1809.04 134.99v3.2M1810.62 131.34v4M1812.2 127.86v6.57M1823.25 130.9v4.32M1826.41 131.9v2.4M1827.99 127.97v4.69M1837.47 135v3.13M1845.36 136.21v2.88M1846.94 133.08v6.9M1848.52 133.62v3.52M1850.1 132.64v1.92M1851.68 131.16v2.66M1864.31 136.14v5.3M1867.47 133.96v4.87M1883.26 141.2v2.99M1884.84 138.11v6.22M1887.99 138.1v1.62M1891.15 135.3v6.69M1894.31 135.89v1.75M1895.89 133.54v4.07M1897.47 135v2.51" stroke="#f40000" stroke-width="1.550" fill="none"/><path d="M18.41 351.71v2.42M23.15 352.06v1.55M27.89 350.74v3.32M53.76 309.79v1.6M55.34 309.75v1.95M56.91 306.8v1.6M71.13 279.35v1.6M99.55 273.84v1.48M101.13 272.56v3.28M104.28 270.48v3.93M115.34 290.48v1.6M129.55 281.99v1.98M140.6 286.2v1.3M142.18 284.46v1.6M162.71 295.62v1.3M165.87 298.57v1.87M173.76 301.37v1.6M184.81 296.08v1.6M189.55 290.63v3.13M192.71 288.12v1.6M211.66 274.23v1.6M216.39 275.97v1.6M229.03 270.29v1.6M235.34 260.07v1.6M243.24 253.64v2.07M247.97 254.22v1.6M249.55 253.97v1.97M257.45 251.52v1.6M259.03 252.26v3.2M262.18 248.12v2.57M273.24 245.09v1.6M277.97 244.78v1.7M285.87 244.71v1.3M289.03 243.86v5M295.34 243.78v1.4M307.98 243.47v2.17M309.55 242.66v4.84M311.13 244.2v1.6M334.82 237.63v4.68M344.29 231.18v1.6M355.35 222.87v1.3M364.82 226.31v1.75M369.56 224.97v1.6M374.29 224.29v1.71M394.82 226.54v1.6M402.72 229.92v1.3M407.45 227.63v5.18M415.35 221.72v4.82M416.93 223.81v1.44M429.56 227.29v1.6M431.14 227.42v2.91M435.87 225.5v2.9M450.09 211.77v2.49M467.45 212.38v2M473.77 213.26v1.6M480.09 215.47v3.42M486.4 210.57v3M487.98 212.7v1.95M489.56 214.96v1.6M502.19 220.83v2.83M514.82 216.96v1.6M522.72 205.2v1.3M524.3 203.38v1.6M525.88 201.93v4.09M536.93 205.53v1.91M541.67 191.99v2.7M543.25 191.78v1.3M547.98 189.82v2.59M552.72 188.67v2.38M562.19 188.57v1.3M566.93 186.84v1.3M576.41 187.9v1.6M577.98 186.05v5.98M581.14 184.79v1.87M584.3 184.54v1.6M601.67 176.87v1.6M625.35 187.84v1.6M666.41 194.47v3.49M697.43 162.78v1.6M714.8 167.39v2.11M725.85 162.4v1.9M755.85 156.65v4.55M773.22 157.11v4.01M796.9 144.74v2.97M817.43 148.41v4.68M833.22 145.82v2.13M850.59 136.48v1.6M855.33 134.15v4.84M866.38 120.66v1.6M893.22 112.81v1.6M902.7 110.14v5.61M905.86 113.94v3.79M912.17 120.92v1.3M913.75 121.47v1.64M923.22 127.6v1.6M939.01 139.94v5.65M950.07 135.25v1.6M967.44 133.32v5.99M980.07 146.95v4.19M1000.6 144.19v1.6M1044.81 141.16v2.18M1046.39 143.28v1.6M1047.97 144.43v1.6M1054.28 148.46v1.63M1057.44 148.35v3.25M1060.6 146.19v2.59M1062.18 145.69v1.6M1087.44 125.42v1.3M1089.02 121.09v5.72M1100.07 134.06v1.3M1112.7 148.13v1.6M1133.23 153.18v3.4M1153.76 155.07v1.7M1180.6 139.44v1.6M1188.5 134.44v1.6M1202.71 141.94v3.26M1209.02 144.11v1.6M1213.76 151.83v1.6M1218.5 159.97v1.6M1229.55 164.19v2.26M1231.13 165.84v1.6M1250.08 150.21v1.6M1256.39 155.12v3.21M1281.66 136.77v1.3M1284.82 137.67v1.6M1286.39 137.95v1.3M1299.03 144.71v1.6M1306.92 135.71v3.57M1310.08 139.9v1.3M1322.71 144.52v1.6M1329.03 146.16v1.51M1333.76 141.14v3.82M1349.55 138.89v2.38M1359.03 126.02v1.63M1373.24 131.9v1.6M1384.29 139.44v1.6M1387.45 137.09v1.6M1390.61 136.68v1.5M1398.5 134.52v1.6M1419.03 122.88v2.58M1425.35 126.11v1.3M1426.93 123.53v3.3M1453.77 128.87v1.6M1455.35 128.41v1.69M1472.72 101.29v2.8M1490.09 107.4v1.88M1494.82 103.04v1.6M1509.03 90.95v3.57M1512.19 94.48v2.42M1526.4 97.47v1.89M1534.3 105.95v1.3M1542.19 95.66v3.96M1545.35 96.37v2.78M1548.51 94.97v3.81M1562.72 95.86v1.6M1603.77 120.27v1.3M1624.3 105.33v2.52M1627.46 107.46v1.58M1636.93 102.41v2.1M1649.56 113.04v2.44M1662.2 131.25v1.3M1676.41 115v2.24M1681.14 115.4v3.18M1701.67 123.14v1.6M1709.57 121.33v1.6M1711.15 120.25v3.65M1720.62 123.45v1.98M1752.2 135v4.33M1763.25 134.77v2.9M1782.2 139.04v1.6M1785.36 141.59v1.56M1790.1 145.05v1.6M1805.89 136.43v1.6M1807.46 136.33v2.25M1813.78 130.32v1.6M1821.68 134.49v1.3M1832.73 130.92v1.52M1839.04 135.9v2.53M1842.2 136.6v3.03M1856.41 132.7v3.15M1865.89 135.9v2.63M1870.62 133.06v1.6M1876.94 141.28v1.6M1886.41 136.79v3.41M1900.63 135.24v1.3" stroke="#f0f060" stroke-width="1.550" fill="none"/><path d="M36.05 669.12v5.77M43.95 640.13v10.66M47.1 632.97v11.6M50.26 628.62v11.54M51.84 631.54v17.97M53.42 635.49v16.27M67.63 606.17v12.21M70.79 603.24v18.83M77.11 596.5v12.53M80.26 596.7v12.08M86.58 594.15v6.18M91.32 589.55v9.51M96.05 586.88v20.64M97.63 604.32v9.96M107.11 595.8v9.54M108.69 597.71v18.54M110.26 605.99v8.57M116.58 605.88v4.23M118.16 608.77v8.38M129.21 571.13v7.68M130.79 576.96v4.87M133.95 580.09v6.31M137.11 576.33v15.46M141.84 581.35v2.55M145 578.91v5.51M146.58 581.81v4.58M149.74 581.94v5.79M152.9 583.92v6.66M154.48 584.28v7.81M157.63 587.75v5.47M159.21 590.44v3.29M160.79 591.19v8.05M162.37 591.17v7.57M167.11 591.11v6.72M168.69 593.22v8.81M171.85 597.16v7.86M178.16 583.08v12.31M179.74 589.84v2.11M187.64 568.62v6.78M203.43 514.64v19.75M205 533.09v4.94M209.74 530.28v3.07M211.32 530.07v10.41M212.9 540.15v8.66M214.48 540.67v17.4M216.06 555.83v5.49M222.37 539.54v10.52M223.95 549v2.48M235.01 531.7v3.27M244.48 523.09v4.64M246.06 525.02v6.16M247.64 525.49v9.03M258.69 516.03v4.93M260.27 518.52v6.81M261.85 521.09v3.63M272.9 508.55v2.49M274.48 509.11v7.08M276.06 515.98v4.91M277.64 516.64v6.7M279.22 521.46v4.42M280.8 523.75v6.73M291.85 508.96v5.13M293.43 511.74v2.56M295.01 512.6v2.55M296.59 513.21v2.95M298.17 512.74v6.63M299.74 515.05v4.16M301.32 518.27v2.76M302.9 519.29v5.1M306.06 520.83v4.12M307.64 522.09v4.49M309.22 523.05v6.51M310.8 528.85v3.34M312.38 529.51v4.9M313.96 530.81v5.95M315.53 531.51v6.47M317.11 533.98v7.26M318.69 537.61v5.87M320.27 540.36v1.3M321.85 540.22v2.92M331.32 529.43v4.05M353.43 512.84v1.52M356.59 508.36v5.83M359.75 508.99v7.06M362.9 513.84v2.98M366.06 510.63v6.25M369.22 508.84v10.24M372.38 514.82v7.05M375.54 514.91v6.52M377.12 519.36v5.55M378.69 521.07v5.47M380.27 523.5v3.8M381.85 526.03v3.34M391.33 521.58v5.66M396.06 522.16v6M397.64 523.69v5.48M399.22 525.96v5.78M405.54 527.51v2.02M410.27 524.63v1.86M413.43 525v3.18M416.59 524.68v4.08M422.91 512.28v4.97M424.49 515.6v7.83M426.06 518.4v3.31M427.64 519.58v5.26M430.8 522.55v6.36M443.43 475.87v6.95M446.59 481.78v3.1M449.75 478.9v2.52M457.64 472.4v5.99M459.22 475.45v4.02M462.38 476.36v5.46M463.96 480.2v6.36M465.54 480.66v5.18M467.12 484.78v5.56M468.7 483.94v6.6M470.28 488.64v4.1M476.59 484.03v1.3M478.17 483.81v3.68M482.91 481.66v5.01M484.49 482.1v4.12M486.07 483.5v5.07M487.65 485.79v9.69M490.8 487.8v7.69M492.38 492.18v3.22M495.54 491.47v6.31M497.12 491.95v4.33M500.28 491.87v1.39M503.44 487.84v4.94M508.17 482.79v9.65M511.33 491.64v1.3M512.91 488.19v6.66M514.49 491.88v3.15M522.38 488.7v6.41M523.96 490.73v2.91M527.12 491.45v6.13M533.44 488.03v7.76M542.91 481.83v6.02M544.49 486.61v3.47M547.65 486.15v9.35M550.81 491.75v5.26M552.38 495.37v3.11M560.28 485.69v2.04M561.86 485.13v8.14M565.02 486.6v4.03M577.65 478.5v6.3M595.02 460.2v4.12M596.6 461.1v6.72M598.18 465.79v8.57M599.75 466.82v7.52M601.33 473.68v5.12M602.91 475.71v10.87M604.49 481.65v9.59M606.07 490.02v7.4M609.23 491.6v2.5M618.7 484.16v4.64M620.28 485.22v3.56M621.86 486.88v4.79M623.44 488.72v2.56M625.02 489.88v3.48M626.6 490.3v9.45M628.18 498.33v4.02M629.76 498.37v8.31M631.33 504.29v8.66M632.91 509.5v6.55M640.81 497.63v5.23M650.28 490.55v10.28M651.86 499.18v6.14M653.44 503.56v8.98M661.34 497.69v5.9M662.91 499.95v6.43M664.49 501v6.93M666.07 506.19v4.28M669.23 506.11v4.57M672.39 507.63v5M675.55 507.85v2.47M680.28 507.07v7.2M685.02 509.22v2.71M686.6 508.72v6.87M688.18 512.07v3.22M689.76 511.69v5.22M691.34 513.28v6.97M692.92 518.84v8.09M705.55 503.13v5.99M707.13 508.76v4.47M726.07 494.08v3.77M729.23 494.14v5.87M730.81 497.9v2.97M733.97 499.34v2.05M737.13 499.59v1.95M740.29 499.93v1.3M745.02 497.98v4.97M751.34 500.93v4.52M752.92 502.88v1.83M754.5 502.82v4.91M756.08 502.13v6.41M759.23 505.1v1.86M765.55 502.21v2.07M768.71 499.52v9.77M770.29 506.76v6.09M771.87 512.17v4.11M782.92 508.01v2.51M784.5 508.33v3.37M786.08 510.91v3.11M787.66 511.16v16.68M789.23 525.05v3.56M809.76 498.06v2.67M820.81 485.86v2.61M823.97 487.29v3.09M825.55 489.42v2.99M828.71 491.85v2.95M833.45 489.31v4.41M835.03 493.24v1.3M846.08 488v3.11M847.66 490.72v1.3M849.24 489.62v5.05M865.03 470.87v2.8M869.76 468.85v5.94M882.4 452.02v5.83M883.97 456.01v2.88M885.55 457.06v2.59M887.13 459.39v4.64M904.5 452.47v4.58M906.08 455.68v4.31M907.66 457.06v3.62M910.82 456.42v7.28M918.71 460.76v2.83M920.29 463.28v4.82M921.87 466.56v4.87M923.45 469.55v5.41M928.19 476.97v4.13M929.77 478.52v2.57M931.34 480.53v7.16M932.92 484.85v3.24M958.19 467.45v2.4M964.5 467.87v4.05M966.08 468.91v4.19M972.4 472.67v5.74M973.98 474.67v3.89M977.14 475.29v6.23M980.29 477.8v6.34M981.87 479.58v4.23M989.77 478.4v3.64M1005.56 474.88v4.85M1010.29 477.36v4.19M1011.87 480.58v8.3M1013.45 481.77v6.25M1016.61 483.31v4.19M1019.77 484.34v5.48M1024.51 486.76v3.19M1029.24 493.22v3.96M1030.82 493.61v6.4M1033.98 496.94v4.18M1037.14 499.65v6.41M1062.4 472.62v4.38M1068.72 476.87v3.75M1070.3 476.21v5.99M1073.45 479.68v6.74M1089.24 460.75v2.77M1092.4 462.07v6.16M1093.98 464.24v2.68M1098.72 464.22v2.05M1103.46 464.38v8.93M1105.03 469.79v9.56M1106.61 477.51v7.5M1108.19 483.5v5.66M1109.77 487.26v6.25M1111.35 492.32v4.33M1125.56 476.07v3.66M1127.14 476.91v1.58M1128.72 477.67v2.76M1149.25 461.69v2.64M1152.4 462.27v4.23M1176.09 458.67v6.9M1179.25 461.3v3.36M1196.62 457.28v3.89M1199.77 458.68v2.73M1201.35 460.6v4.51M1202.93 463.09v3.84M1207.67 467.15v3.96M1210.83 469.15v7.11M1220.3 479.59v4.44M1221.88 481.69v4.25M1232.93 445.55v2.68M1234.51 446.66v7.89M1236.09 450.45v5.82M1237.67 451.68v6M1251.88 435.54v4.34M1253.46 436.42v3.73M1266.09 430.09v2.6M1269.25 430.54v9.58M1270.83 436.88v4.24M1285.04 420.59v6.45M1286.62 422.85v8.57M1288.2 429.65v5.83M1289.78 434.02v4.8M1292.94 435.78v6.08M1296.09 441.4v2.08M1299.25 445.16v3.33M1300.83 447.39v2.8M1319.78 448.39v4.94M1326.09 456.7v4.74M1327.67 459.73v3.43M1333.99 463.77v2.71M1340.31 451.81v7.28M1346.62 459.54v2.88M1348.2 459.54v5.39M1349.78 459.22v3.87M1352.94 465.12v1.43M1354.52 465.45v3.55M1362.41 457.13v3.62M1363.99 459.96v4M1365.57 460.33v7.02M1367.15 462.56v8.65M1368.73 470.37v10.83M1370.31 476.92v7.11M1375.04 480.82v3.64M1376.62 482.2v6.18M1384.52 479.33v4.29M1397.15 469v5.26M1398.73 471.59v5.9M1400.31 474.9v1.3M1412.94 461.76v2.52M1447.3 466.12v4.27M1475.72 440.45v4.97M1477.3 442.95v7.21M1480.46 447.86v1.45M1486.78 448.94v2.15M1488.36 449.27v3.15M1493.09 454v3.54M1516.78 440.21v5.51M1518.36 443.03v3.13M1590.99 441.58v4.55M1592.57 444.55v5.87M1597.31 449.05v1.64M1625.73 434.93v3.63M1639.94 438.25v3.68M1641.52 438.89v7.53M1644.68 445.62v5.25M1660.47 455.66v2.38M1696.78 446.61v2.55M1699.94 447.12v2.01M1739.42 437.05v8.1M1741 443.91v7.6M1742.58 449.79v5.89M1744.15 454.47v8.47M1745.73 462.35v4.71M1794.68 447v3.44M1816.79 443.49v4.41M1854.68 443.93v3.85M1856.26 446.34v4.92M1872.05 457.97v5.19M1884.69 466.99v3.74M1895.74 460.84v3.23" stroke="#0a84f0" stroke-width="1.550" fill="none"/><path d="M37.63 657.66v18.07M39.21 650.38v20.34M40.79 635.14v26.45M42.37 638.26v9.92M45.53 635.08v12.3M48.68 625.24v18.62M55 638.93v11.58M56.58 624.8v18.14M58.16 622.66v13.05M59.74 620.21v16.89M61.32 616.52v6.5M62.89 616.44v3.34M64.47 612.57v10.87M66.05 610.61v4.07M69.21 608.02v9.29M72.37 608.34v9.38M73.95 606.05v7.52M75.53 595.45v12.94M78.68 600.78v6.03M81.84 594.62v10.78M83.42 595.6v6.74M85 594.45v10.82M88.16 594.62v6.47M89.74 591.47v6.75M92.9 587.39v12.88M94.47 583.85v7.48M99.21 595.87v17.29M102.37 590.73v19.86M103.95 595.57v10.59M105.53 596.34v5.75M111.84 608.75v5.71M113.42 604.7v9.8M115 603.81v5.16M119.74 607v3.76M121.32 594.45v17.46M122.9 576.98v26.07M124.48 576.74v7.26M126.05 573.64v5.83M127.63 569.4v10.99M135.53 579.72v8.72M138.69 582.38v4.17M140.27 580.83v8.11M143.42 577.32v8.9M148.16 581.45v6.39M151.32 584.43v7.78M156.06 589.16v3.1M163.95 590.33v10.46M165.53 591.92v3.07M170.27 597.27v3.11M173.42 596.04v5.73M175 590.02v10.05M176.58 584.54v8.34M181.32 588.48v5.94M182.9 577.53v15.77M184.48 580.03v1.73M186.06 571.3v12.22M189.21 564.57v10M190.79 558.13v10.54M192.37 552.87v12.11M193.95 553.14v8.07M195.53 549.03v6.2M197.11 541.15v12.66M198.69 529.98v16.84M200.27 525.96v12.01M201.85 519.42v11.77M206.58 526.23v10.98M208.16 529.03v7.93M217.64 549.15v9.86M219.22 543v15.46M220.79 543.02v7.52M225.53 550.01v5.19M227.11 544.6v10.89M228.69 536.7v13.3M230.27 534.27v11.48M231.85 531.15v8.69M233.43 530.6v8.44M236.58 525.64v9.87M238.16 523.59v9.68M239.74 525.47v7.3M241.32 523v8.73M242.9 520.51v7.33M249.22 528.58v9.24M250.8 525.5v4.41M252.37 520.17v10.98M253.95 520.32v2.89M255.53 517.95v3.77M257.11 515.96v3.53M263.43 520.52v4.97M266.59 516.1v8.24M269.74 515.05v4.66M271.32 507.24v9.26M282.38 521.14v7.52M283.95 519.61v3.01M285.53 513.01v8.24M287.11 512.31v7.31M290.27 508.13v8.84M323.43 537.87v6.05M325.01 534.01v9.79M326.59 534.83v2.83M328.17 527.03v9.08M329.75 529.03v2.1M332.9 528.65v5.5M336.06 525.18v7.46M337.64 526.82v4.56M339.22 522.99v5.77M340.8 519.95v7.98M342.38 518.45v4.43M343.96 518.17v8.76M345.54 515.23v3.59M347.11 515.57v2.71M348.69 511.73v7.34M350.27 512.61v3.88M351.85 512.22v3.23M355.01 506.66v10.67M358.17 509.41v4.29M364.48 510.65v6M370.8 514.63v2.35M373.96 517.64v5.37M383.43 523.6v11.67M386.59 521.91v5.1M389.75 522.45v2.13M394.48 523.21v6.04M400.8 526.25v6.51M403.96 523.23v7.94M408.7 523.51v6.72M411.85 524.96v3.96M415.01 523.76v9.35M418.17 526.73v3.8M419.75 520.68v10.83M421.33 514.62v7.83M432.38 507.3v20M433.96 487.73v24.06M435.54 486.35v3.97M437.12 481.57v6.71M438.7 476.57v5.53M440.28 478.32v6.47M441.85 476.26v3.17M448.17 479.12v9.16M451.33 477.77v3.67M452.91 474.48v6.85M454.49 474.32v2.07M456.07 473.13v1.87M473.43 486.57v2.59M475.01 482.53v5.04M479.75 483.03v3.06M481.33 479.4v8.22M489.22 489.86v1.48M493.96 492.05v2.34M498.7 492.01v6.38M501.86 488.3v6.45M505.01 484.84v7.15M506.59 486.63v2.97M509.75 489.58v3.32M517.65 490.17v3.9M519.23 490.76v2.57M520.8 486.1v9.09M530.28 492.83v2.95M531.86 490.45v3.17M535.02 486.99v6.22M536.59 486.94v2.24M538.17 485.22v2.95M539.75 482.73v4.65M541.33 480.28v3.6M546.07 487.73v3.24M553.96 491.8v5.52M555.54 485.91v8.24M557.12 484.19v6.52M563.44 488.38v2.92M566.6 485.63v5.62M568.17 484.58v3.3M569.75 484.59v1.4M571.33 481.91v2.81M572.91 475.65v8.18M574.49 478.98v3.13M576.07 479.07v1.66M579.23 477.14v3.47M580.81 477.23v4.65M582.39 475.12v5.8M583.96 471.72v5.7M585.54 472.88v1.3M587.12 466.61v8.31M590.28 464.41v6.77M591.86 461.5v5.23M593.44 458.63v4.67M607.65 490.52v5.15M610.81 490.85v8.06M612.39 489.55v4.15M613.97 488.88v2.32M615.54 486.9v4.26M617.12 485.31v2.64M634.49 510.61v6.66M636.07 504.81v7.42M637.65 501.96v4.44M639.23 499.04v6.61M642.39 496.51v8.84M645.55 496.18v5.03M647.12 489.17v8.45M648.7 491.09v3.28M655.02 507.18v4.87M656.6 500.35v8.93M658.18 501.85v3.63M659.76 499.08v5.56M667.65 508.67v1.33M673.97 509.09v2.71M677.13 507.7v5.19M678.7 504.14v6.1M681.86 508.51v4.76M683.44 508.49v1.66M694.49 520.64v4.7M696.07 515.89v7.52M697.65 512.71v6.4M699.23 509.36v4.27M702.39 504.42v4.96M703.97 503.97v2.6M708.71 509.23v4.08M710.28 505.89v6.02M711.86 504.9v2.6M713.44 499.74v5.72M715.02 500.68v4.12M719.76 497.17v1.55M721.34 495.34v2.41M727.65 495.68v2.91M741.86 498.61v2.5M748.18 497.96v3.69M760.81 502.4v4.27M762.39 502.82v2.18M767.13 500.21v4.75M773.44 510.59v6.44M778.18 508.96v4.24M779.76 506.98v3.04M781.34 507v4.06M790.81 522.44v7.39M792.39 516.9v6.17M793.97 513.25v4.3M801.87 505.04v3.58M805.02 501.77v3.22M806.6 502.19v3.5M808.18 497.87v6.45M812.92 494.68v4.65M814.5 490.04v5.06M830.29 491.31v3.06M836.6 489.85v6.94M850.82 489.44v3.41M852.39 487.82v4.04M853.97 486v5.07M855.55 484.85v2.06M857.13 481.86v4.07M858.71 479.25v3.95M860.29 475.03v6.89M861.87 472.47v3.96M863.45 470.43v6.51M866.61 469v2.63M871.34 468.44v5.02M872.92 460.88v9.62M874.5 459.3v5.34M876.08 458.03v3.38M877.66 454.51v5.53M893.45 461.08v4.13M899.76 455.38v4.6M901.34 456.69v1.39M912.4 461.67v2.74M915.55 459.99v7.02M917.13 459.01v3.61M934.5 482.15v7.35M936.08 484v2.12M939.24 480.41v5.16M940.82 480.62v5.76M942.4 479.78v1.88M945.56 476.72v7.84M955.03 468.62v4.4M956.61 466.88v4.91M961.35 467.44v7.41M962.92 468.77v1.82M975.56 475.27v5.61M978.71 477.28v4.07M983.45 482.77v1.47M986.61 480.62v2.82M991.35 478.67v3.57M992.93 475.7v7.39M994.5 473.3v5.72M996.08 473.26v3.19M997.66 471.78v2.31M1000.82 473.23v2.02M1003.98 473.75v4.82M1008.72 477.91v3.81M1038.72 498.73v6.34M1040.3 491.48v8.48M1048.19 489.53v2.78M1049.77 490.06v3.15M1051.35 485.48v7.02M1054.51 475.87v8.1M1056.09 475.16v3.05M1057.66 472.88v4.55M1067.14 476.07v2.19M1075.03 478.83v6.84M1078.19 471.11v7.78M1079.77 466.7v6.22M1081.35 465.36v3.45M1082.93 463.46v4.39M1095.56 464.43v3.08M1097.14 463.81v3.13M1101.88 464.87v3.42M1112.93 488.84v6.74M1114.51 485.65v6.29M1116.09 479.83v6.6M1117.67 476.51v7.06M1123.98 476.54v1.5M1131.88 471.54v6.87M1133.46 469.3v6.09M1135.04 463.85v6.07M1136.61 463.38v6.5M1139.77 464.66v4.42M1146.09 461.19v2.74M1160.3 465.78v5.64M1161.88 461.29v8.32M1165.04 455.13v5.39M1166.62 453.69v4.04M1182.41 461v3.95M1183.98 459.88v3.4M1223.46 480.25v6.49M1225.04 478.42v4.4M1226.62 464.59v14.77M1228.2 452.4v14.8M1229.78 447.95v6.68M1231.35 446.42v4.75M1239.25 449.17v9.36M1240.83 446.63v5.68M1242.41 439.75v8.32M1243.99 438.83v3.75M1247.14 438.11v2.65M1250.3 435.62v5.6M1258.2 434.99v3.5M1259.78 433.98v2.54M1261.36 431.93v2.7M1264.51 430.59v1.3M1272.41 437.12v3.5M1275.57 434.34v3.12M1277.15 432.46v3.55M1280.3 427.04v4.83M1281.88 424.97v3.55M1283.46 420.28v7.85M1303.99 445.83v2.96M1305.57 440.25v9.81M1308.73 441.16v3.33M1310.3 437.97v5.06M1335.57 457.26v9.92M1337.15 455.66v5.12M1338.73 453v5.33M1356.1 463.4v4.29M1357.67 460.36v4.97M1360.83 456.84v5.14M1371.89 477.72v7.91M1381.36 483.55v7.38M1382.94 477.21v10.83M1392.41 472.34v6.23M1401.89 472.23v4.11M1403.47 469.54v3.55M1414.52 460.85v3.13M1450.46 470.09v2.31M1459.93 468.36v3.87M1463.09 465.69v4.72M1464.67 459.97v6.95M1466.25 454.47v8.99M1467.83 448.75v7.48M1470.99 443.8v4.47M1472.57 441.09v3.99M1500.99 451.29v5.75M1502.57 445.62v6.67M1504.15 443.75v3.41M1512.04 441.6v2.93M1537.31 449.02v1.72M1554.67 435.68v3.88M1578.36 439.42v2.76M1602.04 444.24v4.56M1609.94 440.74v5.08M1617.83 437.03v3.36M1655.73 454v2.47M1677.84 442.69v3.33M1703.1 447.62v1.71M1717.31 443.35v3.42M1747.31 460.08v7.11M1748.89 456.67v4.9M1761.52 443.96v3.81M1767.84 438.3v3.67M1810.47 444.83v2.4M1846.79 449.52v4.62M1889.42 463.81v6.77" stroke="#f40000" stroke-width="1.550" fill="none"/><path d="M14.66 707.44l3 -1.600M26.35 702.47l3 -1.600M30.82 712.66l3 -1.600M100.79 602.22v2.65M132.37 577.54v3.51M265.01 522v1.3M268.16 517.11v1.99M288.69 511.08v4.31M304.48 521.24v1.3M334.48 527.64v2.81M361.33 512.03v3.27M367.64 512.08v2.76M385.01 523.96v5.81M388.17 520.77v4.91M392.91 523.9v2.1M402.38 528.05v1.6M407.12 527.8v2.23M429.22 523.48v3.25M445.01 481.65v1.6M460.8 477.84v2.93M471.86 487.47v1.6M516.07 491.72v1.6M525.54 491.63v1.3M528.7 490.75v3.81M549.23 493.25v1.6M558.7 485.21v4.04M588.7 467.98v3.91M643.97 499.15v4.68M670.81 507.27v1.6M700.81 508.25v1.6M722.92 491.6v4.33M732.39 498.56v3.57M735.55 498.23v2.64M746.6 499.57v1.3M757.65 505.12v1.6M795.55 512.52v3.82M800.29 504.99v3.84M803.45 504.01v3.27M816.08 488.91v1.6M819.24 486.08v1.6M827.13 491.75v2.32M831.87 491.06v1.6M839.76 489.28v1.6M841.34 489.66v2.62M842.92 487.55v1.6M844.5 486.91v4.23M868.18 469.63v4.39M879.24 454.52v1.3M880.82 451.82v3.86M888.71 461.32v1.3M890.29 463.19v1.6M895.03 459.3v1.6M896.61 457.31v4.27M913.98 461.44v3.45M925.03 473.06v2.05M937.66 483.29v2.54M943.98 480.25v1.3M948.71 474.54v5.52M953.45 470.81v1.6M959.77 469.6v1.6M967.66 471.8v1.6M969.24 473.27v1.6M985.03 482.86v1.3M988.19 479.79v1.6M999.24 474.02v1.6M1002.4 475.87v1.6M1043.45 490.83v2.32M1046.61 490.17v1.97M1052.93 482.82v1.6M1063.98 474.88v1.95M1065.56 474.71v3.83M1071.88 478.36v5.18M1076.61 476.19v1.6M1084.51 462.53v1.49M1119.25 476.55v1.6M1120.82 476.52v1.3M1122.4 477.35v1.3M1138.19 465.38v1.6M1141.35 461.9v4.71M1144.51 462.72v3.91M1158.72 469.95v3.25M1163.46 458.6v1.6M1169.77 452.96v1.6M1171.35 455.3v1.6M1177.67 461.57v2.14M1185.56 458.08v1.6M1187.14 457.79v1.3M1188.72 457.45v2.41M1191.88 455.93v1.6M1204.51 461.02v7.73M1206.09 466.43v1.6M1245.57 438.55v4.46M1256.62 434.92v4.18M1267.67 433.41v1.6M1278.72 430.57v1.6M1297.67 445.5v1.6M1302.41 446.4v1.6M1307.15 440.83v1.6M1313.46 443.75v1.6M1316.62 447.73v1.6M1318.2 449.12v1.6M1330.83 462.2v1.74M1343.46 455.58v2.01M1345.04 458.94v1.6M1359.25 459.44v1.6M1373.46 477.81v5.57M1378.2 488.31v1.6M1379.78 486.94v3.81M1386.1 478.41v1.6M1390.83 477.84v1.54M1393.99 468.57v1.6M1405.04 466.95v1.6M1406.62 465.79v1.6M1409.78 464.1v1.3M1419.26 456.3v1.6M1420.83 454.98v1.6M1422.41 455.29v2.94M1444.14 464.04v1.6M1448.88 470.51v1.6M1461.51 468.64v1.77M1469.41 445.85v1.6M1478.88 447.36v1.6M1483.62 445.55v3.59M1494.67 457.57v1.6M1497.83 458.53v1.34M1513.62 440.72v3.6M1521.52 446.59v1.6M1523.09 447.08v1.5M1530.99 450.21v1.3M1534.15 450.47v1.6M1538.88 447.36v1.6M1546.78 441.74v1.6M1549.94 439.16v1.6M1551.52 438.66v2.76M1570.46 438.37v1.83M1572.04 437.79v2.44M1575.2 440.37v1.73M1581.52 436.26v1.6M1583.1 434.47v1.6M1586.25 436.89v2.72M1589.41 442.35v1.6M1594.15 448.12v3.08M1608.36 443.3v2.47M1616.26 438.26v1.6M1619.41 436.32v2.26M1622.57 436.21v2.1M1635.2 435.89v1.3M1643.1 446.43v1.6M1650.99 453.87v2.18M1654.15 454.4v1.6M1657.31 453.4v2.46M1658.89 455.64v1.6M1663.63 454.69v1.6M1673.1 444.34v1.6M1674.68 444v1.73M1690.47 441.81v1.6M1695.21 445.01v2.37M1706.26 446.35v2.16M1712.57 446.35v1.74M1720.47 443.38v2.39M1729.94 438.24v2.84M1733.1 437.43v3.37M1756.79 449.25v1.6M1758.37 447.93v3.09M1759.94 446.89v1.6M1766.26 441.47v1.3M1771 441.5v1.6M1774.16 442.98v1.6M1777.31 447.01v1.6M1780.47 447.85v1.6M1785.21 445.37v3.09M1788.37 443.54v1.6M1813.63 441.8v3.13M1815.21 443.73v1.6M1818.37 447.87v1.6M1819.95 448.26v1.76M1823.1 450.98v1.6M1824.68 451v2.43M1827.84 452.56v1.3M1831 451.22v4M1837.32 456.49v1.3M1842.05 453.46v3.83M1851.53 444.48v1.6M1859.42 451.82v2.79M1864.16 455.15v2.69M1891 462.72v1.6M1892.58 460v1.6M1894.16 460.73v1.57" stroke="#f0f060" stroke-width="2.200" fill="none"/><path d="M13.67 987.28H15.25V985.26H16.83V986.22H18.41V983.93H19.99V984.02H21.57V982.29H23.15V984.77H24.73V986.83H26.31V983.2H27.89V983.2H29.46V985.15H31.04V980.89H32.62V977.82H34.2V973.66H35.78V970.23H37.36V965.62H38.94V963.15H40.52V965.03H42.1V970.82H43.68V975.35H45.25V982.6H46.83V981.97H48.41V982.75H49.99V981.98H51.57V982.78H53.15V976.08H54.73V976.23H56.31V976.12H57.89V977.16H59.47V973.86H61.04V969.92H62.62V977.66H64.2V975.86H65.78V972.44H67.36V962.37H68.94V956.48H70.52V954.89H72.1V949.03H73.68V951.56H75.26V960.5H76.83V970.97H78.41V966.39H79.99V966.28H81.57V963.08H83.15V967.81H84.73V967.64H86.31V975.64H87.89V972.2H89.47V969.05H91.05V966.49H92.62V967.31H94.2V958.93H95.78V952.72H97.36V948.74H98.94V956.01H100.52V961.67H102.1V962H103.68V963.21H105.26V967.46H106.84V968.77H108.41V970.28H109.99V961.92H111.57V959.92H113.15V974.43H114.73V978.13H116.31V972.87H117.89V976.5H119.47V978.2H121.05V979.84H122.63V985.38H124.2V995.56H125.78V997.8H127.36V999.27H128.94V997.15H130.52V995.72H132.1V996.18H133.68V996.75H135.26V998.58H136.84V994.08H138.42V990.38H139.99V992.49H141.57V993.76H143.15V993.53H144.73V989.23H146.31V989.49H147.89V985.59H149.47V991.36H151.05V995.85H152.63V998.22H154.21V998.52H155.78V999.02H157.36V1000.88H158.94V1003.53H160.52V1002.58H162.1V1001.65H163.68V1005.2H165.26V1005.05H166.84V1009.13H168.42V1008.52H170V1011.46H171.57V1015.22H173.15V1014.02H174.73V1012.85H176.31V1008.73H177.89V1014.71H179.47V1013.9H181.05V1015.5H182.63V1007.59H184.21V1010.57H185.79V1019.65H187.36V1025.88H188.94V1027.53H190.52V1028.45H192.1V1029.44H193.68V1026.65H195.26V1025.74H196.84V1019.18H198.42V1018H200V1018.26H201.58V1022.68H203.15V1015.94H204.73V1001.84H206.31V1009.86H207.89V1024.93H209.47V1033.99H211.05V1029.44H212.63V1021.43H214.21V1013.15H215.79V1013.24H217.37V1014.98H218.94V1020.2H220.52V1012.39H222.1V1012.02H223.68V1011.79H225.26V1013.68H226.84V1012.48H228.42V1013.34H230V1017.92H231.58V1010.88H233.16V1008.57H234.73V1005.86H236.31V1002.72H237.89V999.95H239.47V996.05H241.05V999.41H242.63V997.14H244.21V993.21H245.79V991.92H247.37V987.81H248.95V996.6H250.52V1003.24H252.1V1006.21H253.68V1001.97H255.26V1005.28H256.84V1003.78H258.42V1002.05H260V999.31H261.58V995.87H263.16V997.8H264.74V1005.18H266.31V1000.59H267.89V991.22H269.47V993.38H271.05V994.74H272.63V989.3H274.21V992.64H275.79V989.52H277.37V989.19H278.95V986.76H280.53V989.51H282.1V978.84H283.68V987.15H285.26V995.43H286.84V1000.44H288.42V1004.64H290V1004.42H291.58V997.78H293.16V998.23H294.74V996H296.32V997.17H297.89V995.95H299.47V997.8H301.05V991.83H302.63V993.07H304.21V991.05H305.79V985.94H307.37V988.94H308.95V984.81H310.53V979.89H312.11V978.75H313.68V970.42H315.26V975.59H316.84V977.94H318.42V978.84H320V977.25H321.58V978.95H323.16V973.5H324.74V978.95H326.32V979.18H327.9V982.58H329.47V979.74H331.05V972.61H332.63V970.98H334.21V965.65H335.79V968.47H337.37V969.57H338.95V969.54H340.53V965.86H342.11V966.25H343.69V964.42H345.26V963.42H346.84V961.12H348.42V958.75H350V958H351.58V957.91H353.16V959.29H354.74V957.05H356.32V956.99H357.9V963.54H359.48V959.75H361.05V963.98H362.63V965.22H364.21V963.47H365.79V961.85H367.37V963.88H368.95V964.63H370.53V961.61H372.11V955.34H373.69V957.86H375.27V960.08H376.84V963.23H378.42V968.42H380V964.39H381.58V963.7H383.16V962.19H384.74V960.83H386.32V957.24H387.9V958.22H389.48V954.29H391.06V951.81H392.63V952.73H394.21V951.51H395.79V949.86H397.37V953.63H398.95V953.16H400.53V955.68H402.11V957.12H403.69V957.33H405.27V954.07H406.85V954.12H408.42V953.41H410V949.7H411.58V948.94H413.16V947.72H414.74V940.31H416.32V940.93H417.9V940.4H419.48V944.79H421.06V949.82H422.64V949.21H424.21V950.96H425.79V951.14H427.37V949.42H428.95V946.81H430.53V950.87H432.11V955.29H433.69V984H435.27V994.16H436.85V991.95H438.43V998.47H440V996.2H441.58V993.27H443.16V984.1H444.74V984.14H446.32V980.41H447.9V981.14H449.48V981.16H451.06V976.81H452.64V976.88H454.22V974.46H455.79V974.63H457.37V970.85H458.95V973.81H460.53V969.41H462.11V973.46H463.69V975.92H465.27V977.65H466.85V973.76H468.43V976.15H470.01V971.69H471.58V967.42H473.16V972.66H474.74V972.46H476.32V974.7H477.9V975.99H479.48V977.45H481.06V975.12H482.64V977.65H484.22V976.74H485.8V971.14H487.37V960.15H488.95V965.72H490.53V968.69H492.11V970.38H493.69V974.3H495.27V970.97H496.85V975.4H498.43V971.23H500.01V983.16H501.59V982.04H503.16V982.56H504.74V979.86H506.32V978.41H507.9V974.88H509.48V976.53H511.06V975.22H512.64V969.66H514.22V967.72H515.8V966.35H517.38V963.11H518.95V956.02H520.53V954.03H522.11V952.57H523.69V948.58H525.27V948.49H526.85V945.32H528.43V944.1H530.01V947.11H531.59V948.16H533.17V947.05H534.74V951.88H536.32V952.58H537.9V949.88H539.48V942.05H541.06V935.59H542.64V932.59H544.22V930.05H545.8V928.15H547.38V925.6H548.96V920.71H550.53V911.81H552.11V916.58H553.69V915.46H555.27V919.23H556.85V919.4H558.43V918.15H560.01V920.25H561.59V919.97H563.17V921.51H564.75V919.71H566.32V922.4H567.9V922.84H569.48V918.69H571.06V918.3H572.64V927.6H574.22V939.48H575.8V933.33H577.38V933.01H578.96V933.14H580.54V932.09H582.11V927.65H583.69V923.09H585.27V926.25H586.85V931.27H588.43V934.7H590.01V938.32H591.59V938.91H593.17V939.3H594.75V931.38H596.33V926.72H597.9V927.27H599.48V928.84H601.06V927.07H602.64V926.23H604.22V923.92H605.8V921.9H607.38V919.14H608.96V915.41H610.54V908.94H612.12V912.91H613.69V915.71H615.27V920.15H616.85V923.96H618.43V923.78H620.01V919.9H621.59V920.68H623.17V922.27H624.75V921.73H626.33V914.25H627.91V908.18H629.48V902.83H631.06V906.16H632.64V909.19H634.22V914.25H635.8V913.89H637.38V908.01H638.96V904.93H640.54V897.57H642.12V896.83H643.7V895.75H645.27V895.3H646.85V892.1H648.43V898.8H650.01V909.02H651.59V917.2H653.17V912.7H654.75V912.12H656.33V913.28H657.91V920.07H659.49V919.43H661.06V922.42H662.64V919.64H664.22V915.43H665.8V911.7H667.38V911.96H668.96V915.51H670.54V910.73H672.12V906.88H673.7V903.76H675.28V896.26H676.85V896.69H678.43V890.46H680.01V891H681.59V891.96H683.17V893.69H684.75V883.65H686.33V873H687.91V874.04H689.49V875.33H691.07V873.05H692.64V853.52H694.22V837.9H695.8V838.24H697.38V838.4H698.96V849.48H700.54V852.48H702.12V848.61H703.7V848.42H705.28V845.39H706.86V841.4H708.43V851.63H710.01V855.76H711.59V862.53H713.17V866.25H714.75V868.34H716.33V867.3H717.91V869.37H719.49V868.22H721.07V865.72H722.65V867.58H724.22V863.13H725.8V862.54H727.38V863.12H728.96V859.76H730.54V860.18H732.12V859.82H733.7V861.37H735.28V865.02H736.86V866.59H738.44V861.36H740.01V864.21H741.59V860.61H743.17V857.91H744.75V855.03H746.33V855.66H747.91V851.97H749.49V849.61H751.07V848.9H752.65V847.28H754.23V841.76H755.8V844.61H757.38V844.65H758.96V846.79H760.54V847.07H762.12V844.54H763.7V841.91H765.28V845.96H766.86V845.72H768.44V843.98H770.02V843.18H771.59V834.66H773.17V832.98H774.75V832.75H776.33V836.36H777.91V832.39H779.49V834.88H781.07V829.61H782.65V828.01H784.23V827.52H785.81V831.97H787.38V831.93H788.96V816.47H790.54V813.12H792.12V809.23H793.7V806.83H795.28V812.37H796.86V815.55H798.44V822.18H800.02V824.74H801.6V824.09H803.17V831.27H804.75V837.87H806.33V842.46H807.91V845.05H809.49V844.63H811.07V847.61H812.65V850.06H814.23V851.55H815.81V853.18H817.39V851.14H818.96V853.49H820.54V855.9H822.12V855.48H823.7V858.2H825.28V857.14H826.86V852.17H828.44V850.65H830.02V844.2H831.6V843.76H833.18V843.48H834.75V843.58H836.33V842.32H837.91V844.22H839.49V852.11H841.07V855.01H842.65V844.59H844.23V833.97H845.81V829.87H847.39V829.99H848.97V830.36H850.54V827.14H852.12V823.79H853.7V823.84H855.28V820.23H856.86V825.26H858.44V821.57H860.02V826.81H861.6V827.92H863.18V823.14H864.76V821.2H866.33V815.71H867.91V817.04H869.49V808.57H871.07V805.59H872.65V803.67H874.23V797.03H875.81V799.81H877.39V798.83H878.97V801.27H880.55V797.98H882.12V796.2H883.7V792.72H885.28V798.36H886.86V808.49H888.44V809.52H890.02V807.94H891.6V811.41H893.18V809.6H894.76V810.62H896.34V813.27H897.91V814.45H899.49V813.78H901.07V819.52H902.65V817.67H904.23V823.03H905.81V823.09H907.39V821.53H908.97V826.62H910.55V826.9H912.13V826.99H913.7V824.96H915.28V823.72H916.86V821.18H918.44V820.34H920.02V825.98H921.6V827.92H923.18V829.57H924.76V829.99H926.34V835.45H927.92V836.84H929.49V833.87H931.07V825.34H932.65V827.58H934.23V829.43H935.81V830.8H937.39V834.17H938.97V838.49H940.55V844.07H942.13V846.82H943.71V845.08H945.28V839.78H946.86V839.51H948.44V837.04H950.02V832.98H951.6V837.34H953.18V838.88H954.76V841.23H956.34V840.8H957.92V840.29H959.5V836.67H961.07V836.03H962.65V835.17H964.23V837.88H965.81V839.31H967.39V837.22H968.97V835.99H970.55V840.49H972.13V847.88H973.71V858.94H975.29V859.25H976.86V856.28H978.44V853.62H980.02V854.02H981.6V856.18H983.18V855.84H984.76V858.11H986.34V857.31H987.92V856.38H989.5V854.88H991.08V855.84H992.65V855.93H994.23V856.84H995.81V857.61H997.39V856.16H998.97V855.28H1000.55V858.01H1002.13V863.54H1003.71V859.38H1005.29V864.09H1006.87V864.18H1008.44V859.31H1010.02V850.32H1011.6V847.66H1013.18V845.95H1014.76V846.38H1016.34V845.3H1017.92V849.04H1019.5V851.46H1021.08V852.1H1022.66V858.02H1024.23V858.14H1025.81V860.57H1027.39V857.05H1028.97V853.23H1030.55V844.22H1032.13V846.05H1033.71V847.93H1035.29V850.88H1036.87V850.32H1038.45V849.9H1040.02V844.86H1041.6V840H1043.18V841.6H1044.76V844.59H1046.34V844.62H1047.92V843.33H1049.5V842.41H1051.08V838.81H1052.66V844H1054.24V853.68H1055.81V856.26H1057.39V862.08H1058.97V864.88H1060.55V866.27H1062.13V866.4H1063.71V859.74H1065.29V859.29H1066.87V858.96H1068.45V855.38H1070.03V856.16H1071.6V850.31H1073.18V846.81H1074.76V843.54H1076.34V838.3H1077.92V834.34H1079.5V831.13H1081.08V833.94H1082.66V836.37H1084.24V835.37H1085.82V836.85H1087.39V837.36H1088.97V835.84H1090.55V834.28H1092.13V838.73H1093.71V841.1H1095.29V845.31H1096.87V857.13H1098.45V849.87H1100.03V847.14H1101.61V850.52H1103.18V853.2H1104.76V854.83H1106.34V846.85H1107.92V845.36H1109.5V853.47H1111.08V849.81H1112.66V841.3H1114.24V843.99H1115.82V847.49H1117.4V845.23H1118.97V848.74H1120.55V852.19H1122.13V855.17H1123.71V861.62H1125.29V863.86H1126.87V866.11H1128.45V869.15H1130.03V871.81H1131.61V878.19H1133.19V877.83H1134.76V879.99H1136.34V884.13H1137.92V887.32H1139.5V889.06H1141.08V885.09H1142.66V890.08H1144.24V885.55H1145.82V881.71H1147.4V874H1148.98V879.34H1150.55V884.46H1152.13V884.32H1153.71V882.38H1155.29V880.11H1156.87V880.07H1158.45V878.71H1160.03V879.09H1161.61V879.03H1163.19V883.13H1164.77V882.5H1166.34V885.1H1167.92V885.24H1169.5V875.51H1171.08V874.2H1172.66V868.03H1174.24V863.55H1175.82V865.18H1177.4V857.43H1178.98V855.69H1180.56V852.51H1182.13V845.48H1183.71V853.52H1185.29V857.17H1186.87V860.62H1188.45V859.75H1190.03V869.24H1191.61V869.97H1193.19V874.66H1194.77V878.12H1196.35V878.4H1197.92V879.81H1199.5V876.46H1201.08V875.93H1202.66V869.61H1204.24V871.99H1205.82V868.94H1207.4V863.73H1208.98V861.26H1210.56V863.8H1212.14V869.13H1213.71V874.09H1215.29V873.22H1216.87V875.11H1218.45V880.53H1220.03V890.13H1221.61V897.75H1223.19V902.36H1224.77V906.25H1226.35V908.66H1227.93V914.56H1229.5V920.06H1231.08V925.93H1232.66V933.4H1234.24V934.79H1235.82V932.3H1237.4V931.53H1238.98V933.08H1240.56V930.54H1242.14V920.77H1243.72V919.82H1245.29V916.75H1246.87V913.01H1248.45V910.5H1250.03V915.07H1251.61V914.08H1253.19V915.58H1254.77V918.12H1256.35V912.62H1257.93V911.45H1259.51V911.96H1261.08V906.54H1262.66V904.36H1264.24V901.31H1265.82V894.92H1267.4V896.29H1268.98V894.63H1270.56V900.69H1272.14V897.71H1273.72V903.54H1275.3V901.4H1276.87V898.03H1278.45V896.66H1280.03V889.49H1281.61V890.32H1283.19V897.13H1284.77V895.79H1286.35V897.93H1287.93V895.83H1289.51V895.62H1291.09V893.82H1292.66V893.62H1294.24V889.91H1295.82V890.85H1297.4V891.42H1298.98V887.77H1300.56V886.34H1302.14V884.09H1303.72V878.89H1305.3V873.92H1306.88V877.45H1308.45V880.26H1310.03V885.71H1311.61V887.83H1313.19V895.57H1314.77V899.52H1316.35V894.56H1317.93V878.66H1319.51V871.31H1321.09V873.62H1322.67V878.45H1324.24V883.39H1325.82V880.41H1327.4V877.32H1328.98V876.24H1330.56V871.1H1332.14V871.73H1333.72V867.79H1335.3V869.57H1336.88V867.48H1338.46V868.63H1340.03V872.17H1341.61V870.52H1343.19V866.98H1344.77V866.09H1346.35V866.31H1347.93V866.68H1349.51V864.06H1351.09V861.98H1352.67V853.98H1354.25V839.93H1355.82V836.79H1357.4V835.15H1358.98V840.18H1360.56V839.99H1362.14V844.05H1363.72V840.4H1365.3V843.32H1366.88V832.64H1368.46V826.36H1370.04V825.26H1371.61V821.87H1373.19V825.53H1374.77V832.07H1376.35V837.67H1377.93V838.84H1379.51V843.23H1381.09V845.66H1382.67V841.05H1384.25V839.1H1385.83V841.21H1387.4V851.79H1388.98V845.89H1390.56V839.44H1392.14V832.81H1393.72V834.95H1395.3V838.48H1396.88V837.78H1398.46V837.29H1400.04V838.54H1401.62V839.1H1403.19V844.36H1404.77V841.47H1406.35V840.39H1407.93V836.75H1409.51V837.44H1411.09V831.44H1412.67V833.1H1414.25V834.29H1415.83V839.23H1417.41V839.22H1418.98V837.86H1420.56V840.62H1422.14V837.8H1423.72V843.46H1425.3V842.31H1426.88V846.63H1428.46V844.82H1430.04V843.53H1431.62V844.6H1433.2V840.33H1434.77V839.3H1436.35V836.48H1437.93V834.58H1439.51V831.82H1441.09V827.41H1442.67V827.26H1444.25V825.36H1445.83V823.3H1447.41V824.62H1448.99V822.89H1450.56V826.82H1452.14V831.93H1453.72V831.86H1455.3V832.03H1456.88V833.96H1458.46V828.84H1460.04V823.19H1461.62V823.73H1463.2V822.33H1464.78V817.61H1466.35V813.98H1467.93V809.56H1469.51V804.93H1471.09V805.55H1472.67V810.48H1474.25V820.11H1475.83V818.05H1477.41V812.76H1478.99V812.7H1480.57V816.47H1482.14V819.97H1483.72V818.25H1485.3V814.9H1486.88V814.43H1488.46V812.58H1490.04V811.76H1491.62V808.53H1493.2V806.9H1494.78V801.01H1496.36V795.46H1497.93V790.09H1499.51V784.34H1501.09V779.47H1502.67V780.29H1504.25V794.95H1505.83V796H1507.41V794.43H1508.99V794.22H1510.57V795.1H1512.15V796.14H1513.72V797.15H1515.3V796.49H1516.88V797.02H1518.46V796.72H1520.04V797.67H1521.62V807.43H1523.2V808.95H1524.78V806.25H1526.36V804.92H1527.94V801.76H1529.51V797.57H1531.09V800.94H1532.67V808.24H1534.25V810.19H1535.83V804.11H1537.41V798.44H1538.99V797.42H1540.57V793.01H1542.15V794.34H1543.73V793.59H1545.3V793.13H1546.88V792.71H1548.46V797.94H1550.04V802.85H1551.62V807.43H1553.2V808.58H1554.78V809.38H1556.36V810.48H1557.94V808.72H1559.52V807.37H1561.09V806.71H1562.67V805.45H1564.25V814.2H1565.83V816.6H1567.41V817.58H1568.99V816.84H1570.57V815.72H1572.15V825.33H1573.73V828.25H1575.31V829.95H1576.88V822.27H1578.46V818.1H1580.04V816.02H1581.62V823.56H1583.2V826.79H1584.78V825.42H1586.36V831.33H1587.94V833.14H1589.52V834.47H1591.1V839.05H1592.67V836.81H1594.25V839.13H1595.83V838.57H1597.41V841.26H1598.99V840.02H1600.57V840.87H1602.15V841.1H1603.73V840.52H1605.31V840.6H1606.89V841.47H1608.46V841.28H1610.04V842.93H1611.62V842.85H1613.2V841.02H1614.78V831.47H1616.36V826.6H1617.94V825.07H1619.52V825.38H1621.1V827.37H1622.68V826.8H1624.25V825.43H1625.83V827.55H1627.41V827.24H1628.99V825.95H1630.57V822.91H1632.15V821.61H1633.73V822.44H1635.31V822.2H1636.89V821.96H1638.47V819.87H1640.04V823.43H1641.62V826.01H1643.2V829.32H1644.78V829.48H1646.36V828.74H1647.94V822.5H1649.52V816.38H1651.1V815.23H1652.68V814.6H1654.26V815.78H1655.83V818.71H1657.41V830.34H1658.99V837.79H1660.57V843.41H1662.15V849.18H1663.73V853.56H1665.31V851.86H1666.89V853.25H1668.47V846.53H1670.05V839.73H1671.62V838.17H1673.2V837.47H1674.78V837.26H1676.36V836.73H1677.94V838.42H1679.52V841.23H1681.1V842.27H1682.68V847.57H1684.26V845.95H1685.84V848.27H1687.41V850H1688.99V848.12H1690.57V847.22H1692.15V850.13H1693.73V848.94H1695.31V847.89H1696.89V843.22H1698.47V846.73H1700.05V847.45H1701.63V847.44H1703.2V849.08H1704.78V847.09H1706.36V848.03H1707.94V845.72H1709.52V843.91H1711.1V844.92H1712.68V846.45H1714.26V845.08H1715.84V845.36H1717.42V847.97H1718.99V847.44H1720.57V850.07H1722.15V853.39H1723.73V855.37H1725.31V850.33H1726.89V847.35H1728.47V850.81H1730.05V848.58H1731.63V844.8H1733.21V842.44H1734.78V843.02H1736.36V838.75H1737.94V840.74H1739.52V846.11H1741.1V861.08H1742.68V873.35H1744.26V873.31H1745.84V870.24H1747.42V868.08H1749V864.29H1750.57V868.95H1752.15V869.62H1753.73V874.19H1755.31V872.41H1756.89V878.41H1758.47V877.14H1760.05V878.18H1761.63V877.47H1763.21V874.03H1764.79V872.19H1766.36V867.9H1767.94V864.44H1769.52V857.89H1771.1V855.82H1772.68V852.84H1774.26V853.6H1775.84V858.39H1777.42V864.5H1779V868.46H1780.58V875.73H1782.15V878.04H1783.73V881.99H1785.31V881.38H1786.89V884.97H1788.47V887.57H1790.05V890.19H1791.63V892.62H1793.21V895.08H1794.79V897.96H1796.37V896.44H1797.94V890.46H1799.52V890.23H1801.1V885.05H1802.68V880.87H1804.26V878.08H1805.84V872.53H1807.42V870.61H1809V867H1810.58V861.05H1812.16V851.87H1813.73V855.22H1815.31V863.51H1816.89V865.52H1818.47V868.3H1820.05V868.63H1821.63V871.79H1823.21V867.38H1824.79V866.11H1826.37V861.39H1827.95V859.21H1829.52V856.59H1831.1V854.52H1832.68V855.52H1834.26V856.96H1835.84V861.04H1837.42V863.51H1839V865.14H1840.58V867.08H1842.16V864.15H1843.74V863.65H1845.31V863.97H1846.89V862.34H1848.47V865.18H1850.05V864.24H1851.63V865.82H1853.21V864.99H1854.79V863.97H1856.37V862.09H1857.95V864.43H1859.53V865.02H1861.1V863.72H1862.68V863.53H1864.26V864.01H1865.84V863.36H1867.42V862.19H1869V862.33H1870.58V862.16H1872.16V861.38H1873.74V862.43H1875.32V870.16H1876.89V872.05H1878.47V868.64H1880.05V862.72H1881.63V859.86H1883.21V854.07H1884.79V853.54H1886.37V850.05H1887.95V850.97H1889.53V848.22H1891.11V852.13H1892.68V853.49H1894.26V850.31H1895.84V851.06H1897.42V848.77H1899V850.59H1900.58V848.92H1902.16V844.4H1903.74V846.03" stroke="#ff0000" stroke-width="2.600" stroke-linejoin="miter" fill="none"/><clipPath id="cp0"><rect x="9" y="76.4" width="1991" height="319.6"/></clipPath><g clip-path="url(#cp0)"><text x="1908" y="102.3" font-family="Liberation Mono" font-size="21.4" letter-spacing="0.800" fill="#e6e6e6" textLength="57.78" lengthAdjust="spacingAndGlyphs">20,100</text><text x="1908" y="153.9" font-family="Liberation Mono" font-size="21.4" letter-spacing="0.800" fill="#e6e6e6" textLength="57.78" lengthAdjust="spacingAndGlyphs">20,000</text><text x="1908" y="205.5" font-family="Liberation Mono" font-size="21.4" letter-spacing="0.800" fill="#e6e6e6" textLength="57.78" lengthAdjust="spacingAndGlyphs">19,900</text><text x="1908" y="257.1" font-family="Liberation Mono" font-size="21.4" letter-spacing="0.800" fill="#e6e6e6" textLength="57.78" lengthAdjust="spacingAndGlyphs">19,800</text><text x="1908" y="308.7" font-family="Liberation Mono" font-size="21.4" letter-spacing="0.800" fill="#e6e6e6" textLength="57.78" lengthAdjust="spacingAndGlyphs">19,700</text><text x="1908" y="360.3" font-family="Liberation Mono" font-size="21.4" letter-spacing="0.800" fill="#e6e6e6" textLength="57.78" lengthAdjust="spacingAndGlyphs">19,600</text><text x="8.6" y="386.9" font-family="Liberation Mono" font-size="20.2" letter-spacing="0.800" fill="#e6e6e6" textLength="19.26" lengthAdjust="spacingAndGlyphs">06</text><text x="58.2" y="386.9" font-family="Liberation Mono" font-size="20.2" letter-spacing="0.800" fill="#e6e6e6" textLength="19.26" lengthAdjust="spacingAndGlyphs">09</text><text x="153.4" y="386.9" font-family="Liberation Mono" font-size="20.2" letter-spacing="0.800" fill="#e6e6e6" textLength="19.26" lengthAdjust="spacingAndGlyphs">10</text><text x="247.2" y="386.9" font-family="Liberation Mono" font-size="20.2" letter-spacing="0.800" fill="#e6e6e6" textLength="19.26" lengthAdjust="spacingAndGlyphs">11</text><text x="342.2" y="386.9" font-family="Liberation Mono" font-size="20.2" letter-spacing="0.800" fill="#e6e6e6" textLength="19.26" lengthAdjust="spacingAndGlyphs">12</text><text x="437.6" y="386.9" font-family="Liberation Mono" font-size="20.2" letter-spacing="0.800" fill="#e6e6e6" textLength="19.26" lengthAdjust="spacingAndGlyphs">13</text><text x="531.5" y="386.9" font-family="Liberation Mono" font-size="20.2" letter-spacing="0.800" fill="#e6e6e6" textLength="19.26" lengthAdjust="spacingAndGlyphs">14</text><text x="626.8" y="386.9" font-family="Liberation Mono" font-size="20.2" letter-spacing="0.800" fill="#e6e6e6" textLength="19.26" lengthAdjust="spacingAndGlyphs">15</text><text x="692.2" y="386.9" font-family="Liberation Mono" font-size="20.2" letter-spacing="0.800" fill="#e6e6e6" textLength="19.26" lengthAdjust="spacingAndGlyphs">17</text><text x="787.6" y="386.9" font-family="Liberation Mono" font-size="20.2" letter-spacing="0.800" fill="#e6e6e6" textLength="19.26" lengthAdjust="spacingAndGlyphs">18</text><text x="881.6" y="386.9" font-family="Liberation Mono" font-size="20.2" letter-spacing="0.800" fill="#e6e6e6" textLength="19.26" lengthAdjust="spacingAndGlyphs">19</text><text x="976.8" y="386.9" font-family="Liberation Mono" font-size="20.2" letter-spacing="0.800" fill="#e6e6e6" textLength="19.26" lengthAdjust="spacingAndGlyphs">20</text><text x="1072.1" y="386.9" font-family="Liberation Mono" font-size="20.2" letter-spacing="0.800" fill="#e6e6e6" textLength="19.26" lengthAdjust="spacingAndGlyphs">21</text><text x="1165.2" y="386.9" font-family="Liberation Mono" font-size="20.2" letter-spacing="0.800" fill="#e6e6e6" textLength="19.26" lengthAdjust="spacingAndGlyphs">22</text><text x="1261" y="386.9" font-family="Liberation Mono" font-size="20.2" letter-spacing="0.800" fill="#e6e6e6" textLength="19.26" lengthAdjust="spacingAndGlyphs">23</text><text x="1354.8" y="386.9" font-family="Liberation Mono" font-size="20.2" letter-spacing="0.800" fill="#e6e6e6" textLength="19.26" lengthAdjust="spacingAndGlyphs">00</text><text x="1450" y="386.9" font-family="Liberation Mono" font-size="20.2" letter-spacing="0.800" fill="#e6e6e6" textLength="19.26" lengthAdjust="spacingAndGlyphs">01</text><text x="1545.5" y="386.9" font-family="Liberation Mono" font-size="20.2" letter-spacing="0.800" fill="#e6e6e6" textLength="19.26" lengthAdjust="spacingAndGlyphs">02</text><text x="1636" y="386.9" font-family="Liberation Mono" font-size="20.2" letter-spacing="0.800" fill="#e6e6e6" textLength="19.26" lengthAdjust="spacingAndGlyphs">03</text><text x="1731.2" y="386.9" font-family="Liberation Mono" font-size="20.2" letter-spacing="0.800" fill="#e6e6e6" textLength="19.26" lengthAdjust="spacingAndGlyphs">04</text><text x="1824.9" y="386.9" font-family="Liberation Mono" font-size="20.2" letter-spacing="0.800" fill="#e6e6e6" textLength="19.26" lengthAdjust="spacingAndGlyphs">05</text><text x="1879.5" y="386.9" font-family="Liberation Mono" font-size="20.2" letter-spacing="0.800" fill="#e6e6e6" textLength="19.26" lengthAdjust="spacingAndGlyphs">06</text><text x="1355" y="363.5" font-family="Liberation Mono" font-size="21.4" letter-spacing="0.800" fill="#e6e6e6" textLength="19.26" lengthAdjust="spacingAndGlyphs">09</text></g><rect x="1907" y="108" width="93" height="33.5" fill="#d2d2d2"/><path d="M1902.5 123.55h4.5" stroke="#f0f060" stroke-width="1.6"/><text x="1922.01" y="129.95" font-family="Liberation Mono" font-size="21.4" font-weight="bold" fill="#000" textLength="59.88" lengthAdjust="spacingAndGlyphs" stroke="#000" stroke-width="0.450">20,066</text><clipPath id="cp1"><rect x="9" y="404.5" width="1991" height="348.3"/></clipPath><g clip-path="url(#cp1)"><text x="1908" y="416.8" font-family="Liberation Mono" font-size="21.4" letter-spacing="0.800" fill="#e6e6e6" textLength="48.15" lengthAdjust="spacingAndGlyphs">7,900</text><text x="1908" y="501.3" font-family="Liberation Mono" font-size="21.4" letter-spacing="0.800" fill="#e6e6e6" textLength="48.15" lengthAdjust="spacingAndGlyphs">7,800</text><text x="1908" y="586.3" font-family="Liberation Mono" font-size="21.4" letter-spacing="0.800" fill="#e6e6e6" textLength="48.15" lengthAdjust="spacingAndGlyphs">7,700</text><text x="1908" y="671.3" font-family="Liberation Mono" font-size="21.4" letter-spacing="0.800" fill="#e6e6e6" textLength="48.15" lengthAdjust="spacingAndGlyphs">7,600</text><text x="1908" y="756.3" font-family="Liberation Mono" font-size="21.4" letter-spacing="0.800" fill="#e6e6e6" textLength="48.15" lengthAdjust="spacingAndGlyphs">7,500</text><text x="8.6" y="743.3" font-family="Liberation Mono" font-size="20.2" letter-spacing="0.800" fill="#e6e6e6" textLength="19.26" lengthAdjust="spacingAndGlyphs">06</text><text x="58.2" y="743.3" font-family="Liberation Mono" font-size="20.2" letter-spacing="0.800" fill="#e6e6e6" textLength="19.26" lengthAdjust="spacingAndGlyphs">09</text><text x="153.4" y="743.3" font-family="Liberation Mono" font-size="20.2" letter-spacing="0.800" fill="#e6e6e6" textLength="19.26" lengthAdjust="spacingAndGlyphs">10</text><text x="247.2" y="743.3" font-family="Liberation Mono" font-size="20.2" letter-spacing="0.800" fill="#e6e6e6" textLength="19.26" lengthAdjust="spacingAndGlyphs">11</text><text x="342.2" y="743.3" font-family="Liberation Mono" font-size="20.2" letter-spacing="0.800" fill="#e6e6e6" textLength="19.26" lengthAdjust="spacingAndGlyphs">12</text><text x="437.6" y="743.3" font-family="Liberation Mono" font-size="20.2" letter-spacing="0.800" fill="#e6e6e6" textLength="19.26" lengthAdjust="spacingAndGlyphs">13</text><text x="531.5" y="743.3" font-family="Liberation Mono" font-size="20.2" letter-spacing="0.800" fill="#e6e6e6" textLength="19.26" lengthAdjust="spacingAndGlyphs">14</text><text x="626.8" y="743.3" font-family="Liberation Mono" font-size="20.2" letter-spacing="0.800" fill="#e6e6e6" textLength="19.26" lengthAdjust="spacingAndGlyphs">15</text><text x="692.2" y="743.3" font-family="Liberation Mono" font-size="20.2" letter-spacing="0.800" fill="#e6e6e6" textLength="19.26" lengthAdjust="spacingAndGlyphs">17</text><text x="787.6" y="743.3" font-family="Liberation Mono" font-size="20.2" letter-spacing="0.800" fill="#e6e6e6" textLength="19.26" lengthAdjust="spacingAndGlyphs">18</text><text x="881.6" y="743.3" font-family="Liberation Mono" font-size="20.2" letter-spacing="0.800" fill="#e6e6e6" textLength="19.26" lengthAdjust="spacingAndGlyphs">19</text><text x="976.8" y="743.3" font-family="Liberation Mono" font-size="20.2" letter-spacing="0.800" fill="#e6e6e6" textLength="19.26" lengthAdjust="spacingAndGlyphs">20</text><text x="1072.1" y="743.3" font-family="Liberation Mono" font-size="20.2" letter-spacing="0.800" fill="#e6e6e6" textLength="19.26" lengthAdjust="spacingAndGlyphs">21</text><text x="1165.2" y="743.3" font-family="Liberation Mono" font-size="20.2" letter-spacing="0.800" fill="#e6e6e6" textLength="19.26" lengthAdjust="spacingAndGlyphs">22</text><text x="1261" y="743.3" font-family="Liberation Mono" font-size="20.2" letter-spacing="0.800" fill="#e6e6e6" textLength="19.26" lengthAdjust="spacingAndGlyphs">23</text><text x="1354.8" y="743.3" font-family="Liberation Mono" font-size="20.2" letter-spacing="0.800" fill="#e6e6e6" textLength="19.26" lengthAdjust="spacingAndGlyphs">00</text><text x="1450" y="743.3" font-family="Liberation Mono" font-size="20.2" letter-spacing="0.800" fill="#e6e6e6" textLength="19.26" lengthAdjust="spacingAndGlyphs">01</text><text x="1545.5" y="743.3" font-family="Liberation Mono" font-size="20.2" letter-spacing="0.800" fill="#e6e6e6" textLength="19.26" lengthAdjust="spacingAndGlyphs">02</text><text x="1636" y="743.3" font-family="Liberation Mono" font-size="20.2" letter-spacing="0.800" fill="#e6e6e6" textLength="19.26" lengthAdjust="spacingAndGlyphs">03</text><text x="1731.2" y="743.3" font-family="Liberation Mono" font-size="20.2" letter-spacing="0.800" fill="#e6e6e6" textLength="19.26" lengthAdjust="spacingAndGlyphs">04</text><text x="1824.9" y="743.3" font-family="Liberation Mono" font-size="20.2" letter-spacing="0.800" fill="#e6e6e6" textLength="19.26" lengthAdjust="spacingAndGlyphs">05</text><text x="1879.5" y="743.3" font-family="Liberation Mono" font-size="20.2" letter-spacing="0.800" fill="#e6e6e6" textLength="19.26" lengthAdjust="spacingAndGlyphs">06</text><text x="1355" y="719.9" font-family="Liberation Mono" font-size="21.4" letter-spacing="0.800" fill="#e6e6e6" textLength="19.26" lengthAdjust="spacingAndGlyphs">09</text></g><rect x="1907" y="436" width="93" height="32" fill="#d2d2d2"/><path d="M1902.5 450.8h4.5" stroke="#f0f060" stroke-width="1.6"/><text x="1926.83" y="457.2" font-family="Liberation Mono" font-size="21.4" font-weight="bold" fill="#000" textLength="49.9" lengthAdjust="spacingAndGlyphs" stroke="#000" stroke-width="0.450">7,863</text><clipPath id="cp2"><rect x="9" y="760.4" width="1991" height="312.2"/></clipPath><g clip-path="url(#cp2)"><text x="1908" y="842.7" font-family="Liberation Mono" font-size="21.4" letter-spacing="0.800" fill="#e6e6e6" textLength="57.78" lengthAdjust="spacingAndGlyphs">12,200</text><text x="1908" y="938.8" font-family="Liberation Mono" font-size="21.4" letter-spacing="0.800" fill="#e6e6e6" textLength="57.78" lengthAdjust="spacingAndGlyphs">12,100</text><text x="1908" y="1034.9" font-family="Liberation Mono" font-size="21.4" letter-spacing="0.800" fill="#e6e6e6" textLength="57.78" lengthAdjust="spacingAndGlyphs">12,000</text><text x="8.6" y="1064.6" font-family="Liberation Mono" font-size="20.2" letter-spacing="0.800" fill="#e6e6e6" textLength="19.26" lengthAdjust="spacingAndGlyphs">06</text><text x="58.2" y="1064.6" font-family="Liberation Mono" font-size="20.2" letter-spacing="0.800" fill="#e6e6e6" textLength="19.26" lengthAdjust="spacingAndGlyphs">09</text><text x="153.4" y="1064.6" font-family="Liberation Mono" font-size="20.2" letter-spacing="0.800" fill="#e6e6e6" textLength="19.26" lengthAdjust="spacingAndGlyphs">10</text><text x="247.2" y="1064.6" font-family="Liberation Mono" font-size="20.2" letter-spacing="0.800" fill="#e6e6e6" textLength="19.26" lengthAdjust="spacingAndGlyphs">11</text><text x="342.2" y="1064.6" font-family="Liberation Mono" font-size="20.2" letter-spacing="0.800" fill="#e6e6e6" textLength="19.26" lengthAdjust="spacingAndGlyphs">12</text><text x="437.6" y="1064.6" font-family="Liberation Mono" font-size="20.2" letter-spacing="0.800" fill="#e6e6e6" textLength="19.26" lengthAdjust="spacingAndGlyphs">13</text><text x="531.5" y="1064.6" font-family="Liberation Mono" font-size="20.2" letter-spacing="0.800" fill="#e6e6e6" textLength="19.26" lengthAdjust="spacingAndGlyphs">14</text><text x="626.8" y="1064.6" font-family="Liberation Mono" font-size="20.2" letter-spacing="0.800" fill="#e6e6e6" textLength="19.26" lengthAdjust="spacingAndGlyphs">15</text><text x="692.2" y="1064.6" font-family="Liberation Mono" font-size="20.2" letter-spacing="0.800" fill="#e6e6e6" textLength="19.26" lengthAdjust="spacingAndGlyphs">17</text><text x="787.6" y="1064.6" font-family="Liberation Mono" font-size="20.2" letter-spacing="0.800" fill="#e6e6e6" textLength="19.26" lengthAdjust="spacingAndGlyphs">18</text><text x="881.6" y="1064.6" font-family="Liberation Mono" font-size="20.2" letter-spacing="0.800" fill="#e6e6e6" textLength="19.26" lengthAdjust="spacingAndGlyphs">19</text><text x="976.8" y="1064.6" font-family="Liberation Mono" font-size="20.2" letter-spacing="0.800" fill="#e6e6e6" textLength="19.26" lengthAdjust="spacingAndGlyphs">20</text><text x="1072.1" y="1064.6" font-family="Liberation Mono" font-size="20.2" letter-spacing="0.800" fill="#e6e6e6" textLength="19.26" lengthAdjust="spacingAndGlyphs">21</text><text x="1165.2" y="1064.6" font-family="Liberation Mono" font-size="20.2" letter-spacing="0.800" fill="#e6e6e6" textLength="19.26" lengthAdjust="spacingAndGlyphs">22</text><text x="1261" y="1064.6" font-family="Liberation Mono" font-size="20.2" letter-spacing="0.800" fill="#e6e6e6" textLength="19.26" lengthAdjust="spacingAndGlyphs">23</text><text x="1354.8" y="1064.6" font-family="Liberation Mono" font-size="20.2" letter-spacing="0.800" fill="#e6e6e6" textLength="19.26" lengthAdjust="spacingAndGlyphs">00</text><text x="1450" y="1064.6" font-family="Liberation Mono" font-size="20.2" letter-spacing="0.800" fill="#e6e6e6" textLength="19.26" lengthAdjust="spacingAndGlyphs">01</text><text x="1545.5" y="1064.6" font-family="Liberation Mono" font-size="20.2" letter-spacing="0.800" fill="#e6e6e6" textLength="19.26" lengthAdjust="spacingAndGlyphs">02</text><text x="1636" y="1064.6" font-family="Liberation Mono" font-size="20.2" letter-spacing="0.800" fill="#e6e6e6" textLength="19.26" lengthAdjust="spacingAndGlyphs">03</text><text x="1731.2" y="1064.6" font-family="Liberation Mono" font-size="20.2" letter-spacing="0.800" fill="#e6e6e6" textLength="19.26" lengthAdjust="spacingAndGlyphs">04</text><text x="1824.9" y="1064.6" font-family="Liberation Mono" font-size="20.2" letter-spacing="0.800" fill="#e6e6e6" textLength="19.26" lengthAdjust="spacingAndGlyphs">05</text><text x="1879.5" y="1064.6" font-family="Liberation Mono" font-size="20.2" letter-spacing="0.800" fill="#e6e6e6" textLength="19.26" lengthAdjust="spacingAndGlyphs">06</text><text x="1355" y="1041.2" font-family="Liberation Mono" font-size="21.4" letter-spacing="0.800" fill="#e6e6e6" textLength="19.26" lengthAdjust="spacingAndGlyphs">09</text></g><rect x="1907" y="827" width="93" height="33" fill="#d2d2d2"/><path d="M1902.5 842.3h4.5" stroke="#f0f060" stroke-width="1.6"/><text x="1922.01" y="848.7" font-family="Liberation Mono" font-size="21.4" font-weight="bold" fill="#000" textLength="59.88" lengthAdjust="spacingAndGlyphs" stroke="#000" stroke-width="0.450">12,203</text><text x="11.5" y="96.6" font-family="'Liberation Mono','Noto Sans CJK JP',monospace" font-size="19.26" fill="#e6e6e6" textLength="38.52" lengthAdjust="spacing">時刻</text><text x="50.02" y="97.2" font-family="Liberation Mono" font-size="21.4" letter-spacing="0.800" fill="#e6e6e6" textLength="57.78" lengthAdjust="spacingAndGlyphs">:06:00</text><text x="117.43" y="96.6" font-family="'Liberation Mono','Noto Sans CJK JP',monospace" font-size="19.26" fill="#e6e6e6" textLength="38.52" lengthAdjust="spacing">始値</text><text x="155.95" y="97.2" font-family="Liberation Mono" font-size="21.4" letter-spacing="0.800" fill="#e6e6e6" textLength="67.41" lengthAdjust="spacingAndGlyphs">:20,066</text><text x="232.99" y="96.6" font-family="'Liberation Mono','Noto Sans CJK JP',monospace" font-size="19.26" fill="#e6e6e6" textLength="38.52" lengthAdjust="spacing">高値</text><text x="271.51" y="97.2" font-family="Liberation Mono" font-size="21.4" letter-spacing="0.800" fill="#e6e6e6" textLength="67.41" lengthAdjust="spacingAndGlyphs">:20,066</text><text x="348.55" y="96.6" font-family="'Liberation Mono','Noto Sans CJK JP',monospace" font-size="19.26" fill="#e6e6e6" textLength="38.52" lengthAdjust="spacing">安値</text><text x="387.07" y="97.2" font-family="Liberation Mono" font-size="21.4" letter-spacing="0.800" fill="#e6e6e6" textLength="67.41" lengthAdjust="spacingAndGlyphs">:20,066</text><text x="464.11" y="96.6" font-family="'Liberation Mono','Noto Sans CJK JP',monospace" font-size="19.26" fill="#e6e6e6" textLength="38.52" lengthAdjust="spacing">終値</text><text x="502.63" y="97.2" font-family="Liberation Mono" font-size="21.4" letter-spacing="0.800" fill="#e6e6e6" textLength="67.41" lengthAdjust="spacingAndGlyphs">:20,066</text><text x="11.5" y="425" font-family="'Liberation Mono','Noto Sans CJK JP',monospace" font-size="19.26" fill="#e6e6e6" textLength="38.52" lengthAdjust="spacing">時刻</text><text x="50.02" y="425.6" font-family="Liberation Mono" font-size="21.4" letter-spacing="0.800" fill="#e6e6e6" textLength="57.78" lengthAdjust="spacingAndGlyphs">:06:00</text><text x="117.43" y="425" font-family="'Liberation Mono','Noto Sans CJK JP',monospace" font-size="19.26" fill="#e6e6e6" textLength="38.52" lengthAdjust="spacing">始値</text><text x="155.95" y="425.6" font-family="Liberation Mono" font-size="21.4" letter-spacing="0.800" fill="#e6e6e6" textLength="57.78" lengthAdjust="spacingAndGlyphs">:7,863</text><text x="223.36" y="425" font-family="'Liberation Mono','Noto Sans CJK JP',monospace" font-size="19.26" fill="#e6e6e6" textLength="38.52" lengthAdjust="spacing">高値</text><text x="261.88" y="425.6" font-family="Liberation Mono" font-size="21.4" letter-spacing="0.800" fill="#e6e6e6" textLength="57.78" lengthAdjust="spacingAndGlyphs">:7,863</text><text x="329.29" y="425" font-family="'Liberation Mono','Noto Sans CJK JP',monospace" font-size="19.26" fill="#e6e6e6" textLength="38.52" lengthAdjust="spacing">安値</text><text x="367.81" y="425.6" font-family="Liberation Mono" font-size="21.4" letter-spacing="0.800" fill="#e6e6e6" textLength="57.78" lengthAdjust="spacingAndGlyphs">:7,863</text><text x="435.22" y="425" font-family="'Liberation Mono','Noto Sans CJK JP',monospace" font-size="19.26" fill="#e6e6e6" textLength="38.52" lengthAdjust="spacing">終値</text><text x="473.74" y="425.6" font-family="Liberation Mono" font-size="21.4" letter-spacing="0.800" fill="#e6e6e6" textLength="57.78" lengthAdjust="spacingAndGlyphs">:7,863</text><text x="11.5" y="781.6" font-family="Liberation Mono" font-size="21.4" letter-spacing="0.800" fill="#e6e6e6" textLength="9.63" lengthAdjust="spacingAndGlyphs">[</text><text x="21.13" y="781" font-family="'Liberation Mono','Noto Sans CJK JP',monospace" font-size="19.26" fill="#e6e6e6">金</text><text x="50.02" y="781.6" font-family="Liberation Mono" font-size="21.4" letter-spacing="0.800" fill="#e6e6e6" textLength="48.15" lengthAdjust="spacingAndGlyphs">26/08</text><text x="107.8" y="781.6" font-family="Liberation Mono" font-size="21.4" letter-spacing="0.800" fill="#e6e6e6" textLength="57.78" lengthAdjust="spacingAndGlyphs">20,066</text><text x="175.21" y="781" text-anchor="middle" font-family="'Liberation Mono','Noto Sans CJK JP',monospace" font-size="19.26" fill="#e6e6e6">×</text><text x="184.84" y="781.6" font-family="Liberation Mono" font-size="21.4" letter-spacing="0.800" fill="#e6e6e6" textLength="48.15" lengthAdjust="spacingAndGlyphs">1.00]</text><text x="232.99" y="781" font-family="'Liberation Mono','Noto Sans CJK JP',monospace" font-size="19.26" fill="#e6e6e6">－</text><text x="252.25" y="781.6" font-family="Liberation Mono" font-size="21.4" letter-spacing="0.800" fill="#e6e6e6" textLength="9.63" lengthAdjust="spacingAndGlyphs">[</text><text x="261.88" y="781" font-family="'Liberation Mono','Noto Sans CJK JP',monospace" font-size="19.26" fill="#e6e6e6" textLength="38.52" lengthAdjust="spacing">白金</text><text x="310.03" y="781.6" font-family="Liberation Mono" font-size="21.4" letter-spacing="0.800" fill="#e6e6e6" textLength="48.15" lengthAdjust="spacingAndGlyphs">26/08</text><text x="367.81" y="781.6" font-family="Liberation Mono" font-size="21.4" letter-spacing="0.800" fill="#e6e6e6" textLength="48.15" lengthAdjust="spacingAndGlyphs">7,863</text><text x="425.59" y="781" text-anchor="middle" font-family="'Liberation Mono','Noto Sans CJK JP',monospace" font-size="19.26" fill="#e6e6e6">×</text><text x="435.22" y="781.6" font-family="Liberation Mono" font-size="21.4" letter-spacing="0.800" fill="#e6e6e6" textLength="48.15" lengthAdjust="spacingAndGlyphs">1.00]</text><text x="493" y="781" font-family="'Liberation Mono','Noto Sans CJK JP',monospace" font-size="19.26" fill="#e6e6e6" textLength="38.52" lengthAdjust="spacing">終値</text><text x="541.15" y="781" font-family="'Liberation Mono','Noto Sans CJK JP',monospace" font-size="19.26" fill="#e6e6e6" textLength="38.52" lengthAdjust="spacing">時刻</text><text x="579.67" y="781.6" font-family="Liberation Mono" font-size="21.4" letter-spacing="0.800" fill="#e6e6e6" textLength="57.78" lengthAdjust="spacingAndGlyphs">:06:00</text><text x="647.08" y="781.6" font-family="Liberation Mono" font-size="21.4" letter-spacing="0.800" fill="#e6e6e6" textLength="57.78" lengthAdjust="spacingAndGlyphs">12,203</text></svg>
<svg width="2011" height="80" viewBox="0 0 2011 80" style="position:absolute;left:0;top:0" role="img"><desc>金1分足[2026/08]1.00 - 白金1分足[2026/08]1.00 / 金 2026/08 1.00 白金 2026/08 1.00 分足 1200 1分足</desc><text x="46" y="28.7" font-family="'Liberation Sans','Noto Sans CJK JP',sans-serif" font-size="19.6" fill="#0a0a0a">金</text><text x="66.9" y="29" font-family="Liberation Sans" font-size="21.6" fill="#0a0a0a" textLength="7" lengthAdjust="spacingAndGlyphs">1</text><text x="74.9" y="28.7" font-family="'Liberation Sans','Noto Sans CJK JP',sans-serif" font-size="19.6" fill="#0a0a0a" textLength="38.6" lengthAdjust="spacing">分足</text><text x="113" y="28.7" font-family="Liberation Sans" font-size="21.6" fill="#0a0a0a" textLength="5.2" lengthAdjust="spacingAndGlyphs">[</text><text x="118" y="29" font-family="Liberation Sans" font-size="21.6" fill="#0a0a0a" textLength="36.6" lengthAdjust="spacingAndGlyphs">2026</text><path d="M154.6 29.6L161.6 13.6" stroke="#0a0a0a" stroke-width="1.500"/><text x="163.5" y="29" font-family="Liberation Sans" font-size="21.6" fill="#0a0a0a" textLength="17.8" lengthAdjust="spacingAndGlyphs">08</text><text x="181" y="28.7" font-family="Liberation Sans" font-size="21.6" fill="#0a0a0a" textLength="5.2" lengthAdjust="spacingAndGlyphs">]</text><text x="188" y="29" font-family="Liberation Sans" font-size="21.6" fill="#0a0a0a" textLength="7" lengthAdjust="spacingAndGlyphs">1</text><rect x="196" y="27.1" width="1.800" height="1.900" fill="#0a0a0a"/><text x="200.4" y="29" font-family="Liberation Sans" font-size="21.6" fill="#0a0a0a" textLength="17.8" lengthAdjust="spacingAndGlyphs">00</text><text x="243.7" y="28.7" font-family="'Liberation Sans','Noto Sans CJK JP',sans-serif" font-size="19.6" fill="#0a0a0a" textLength="38.2" lengthAdjust="spacing">白金</text><text x="283.2" y="29" font-family="Liberation Sans" font-size="21.6" fill="#0a0a0a" textLength="7" lengthAdjust="spacingAndGlyphs">1</text><text x="291.2" y="28.7" font-family="'Liberation Sans','Noto Sans CJK JP',sans-serif" font-size="19.6" fill="#0a0a0a" textLength="38.6" lengthAdjust="spacing">分足</text><text x="329.3" y="28.7" font-family="Liberation Sans" font-size="21.6" fill="#0a0a0a" textLength="5.2" lengthAdjust="spacingAndGlyphs">[</text><text x="334.3" y="29" font-family="Liberation Sans" font-size="21.6" fill="#0a0a0a" textLength="36.6" lengthAdjust="spacingAndGlyphs">2026</text><path d="M370.9 29.6L377.9 13.6" stroke="#0a0a0a" stroke-width="1.500"/><text x="379.8" y="29" font-family="Liberation Sans" font-size="21.6" fill="#0a0a0a" textLength="17.8" lengthAdjust="spacingAndGlyphs">08</text><text x="397.3" y="28.7" font-family="Liberation Sans" font-size="21.6" fill="#0a0a0a" textLength="5.2" lengthAdjust="spacingAndGlyphs">]</text><text x="404.3" y="29" font-family="Liberation Sans" font-size="21.6" fill="#0a0a0a" textLength="7" lengthAdjust="spacingAndGlyphs">1</text><rect x="412.3" y="27.1" width="1.800" height="1.900" fill="#0a0a0a"/><text x="416.7" y="29" font-family="Liberation Sans" font-size="21.6" fill="#0a0a0a" textLength="17.8" lengthAdjust="spacingAndGlyphs">00</text><rect x="227.4" y="21.2" width="7.4" height="1.5" fill="#0a0a0a"/><text x="16.9" y="65.5" font-family="'Liberation Sans','Noto Sans CJK JP',sans-serif" font-size="19.2" fill="#15151c">金</text><text x="53" y="64.9" font-family="Liberation Sans" font-size="19.6" fill="#15151c" textLength="64.6" lengthAdjust="spacingAndGlyphs">2026/08</text><rect x="127.6" y="43.6" width="76.1" height="27.9" fill="#fff" stroke="#e4e6ea" stroke-width="1"/><text x="131.6" y="61.6" font-family="Liberation Sans" font-size="19.8" fill="#0a0a0a" textLength="29" lengthAdjust="spacingAndGlyphs">1.00</text><rect x="179.5" y="45.8" width="21.2" height="11" fill="#e6e6e6" stroke="#b4b4b4" stroke-width="1"/><rect x="179.5" y="56.8" width="21.2" height="10.6" fill="#e6e6e6" stroke="#b4b4b4" stroke-width="1"/><path d="M186.5 54.6l3.6 -5 3.6 5zM186.5 59.6l3.6 5 3.6 -5z" fill="#000"/><rect x="210.6" y="50" width="1.4" height="18.5" fill="#f4f5f8"/><text x="223" y="65.5" font-family="'Liberation Sans','Noto Sans CJK JP',sans-serif" font-size="19.2" fill="#15151c" textLength="37.2" lengthAdjust="spacing">白金</text><text x="276.6" y="64.9" font-family="Liberation Sans" font-size="19.6" fill="#15151c" textLength="64.6" lengthAdjust="spacingAndGlyphs">2026/08</text><rect x="350.6" y="43.6" width="76.1" height="27.9" fill="#fff" stroke="#e4e6ea" stroke-width="1"/><text x="354.4" y="61.6" font-family="Liberation Sans" font-size="19.8" fill="#0a0a0a" textLength="29" lengthAdjust="spacingAndGlyphs">1.00</text><rect x="402.5" y="45.8" width="21.2" height="11" fill="#e6e6e6" stroke="#b4b4b4" stroke-width="1"/><rect x="402.5" y="56.8" width="21.2" height="10.6" fill="#e6e6e6" stroke="#b4b4b4" stroke-width="1"/><path d="M409.5 54.6l3.6 -5 3.6 5zM409.5 59.6l3.6 5 3.6 -5z" fill="#000"/><rect x="433.6" y="50" width="1.4" height="18.5" fill="#f4f5f8"/><text x="444.6" y="65.5" font-family="'Liberation Sans','Noto Sans CJK JP',sans-serif" font-size="19.2" fill="#15151c" textLength="37.4" lengthAdjust="spacing">分足</text><path d="M491.5 55.4h8.6l-4.3 5.2z" fill="#000"/><rect x="506.7" y="43.6" width="71.8" height="27.9" fill="#fff" stroke="#e4e6ea" stroke-width="1"/><text x="511" y="61.6" font-family="Liberation Sans" font-size="19.8" fill="#0a0a0a" textLength="35.4" lengthAdjust="spacingAndGlyphs">1200</text><rect x="554.3" y="45.8" width="21.2" height="11" fill="#e6e6e6" stroke="#b4b4b4" stroke-width="1"/><rect x="554.3" y="56.8" width="21.2" height="10.6" fill="#e6e6e6" stroke="#b4b4b4" stroke-width="1"/><path d="M561.3 54.6l3.6 -5 3.6 5zM561.3 59.6l3.6 5 3.6 -5z" fill="#000"/><text x="587.6" y="64.7" font-family="Liberation Sans" font-size="19.3" fill="#15151c" textLength="6.6" lengthAdjust="spacingAndGlyphs">1</text><text x="596" y="65.5" font-family="'Liberation Sans','Noto Sans CJK JP',sans-serif" font-size="19.2" fill="#15151c" textLength="37.6" lengthAdjust="spacing">分足</text><path d="M642.8 55.4h8.6l-4.3 5.2z" fill="#000"/><rect x="663.8" y="50" width="1.4" height="18.5" fill="#f4f5f8"/><rect x="708.8" y="50" width="1.4" height="18.5" fill="#f4f5f8"/><rect x="861.8" y="50" width="1.4" height="18.5" fill="#f4f5f8"/><rect x="952.4" y="50" width="1.4" height="18.5" fill="#f4f5f8"/><rect x="668.5" y="43.3" width="27" height="27" fill="#b4b8c2"/><rect x="668.5" y="69.3" width="27" height="1.2" fill="#f2f2f4"/><rect x="694.6" y="43.3" width="1.2" height="27" fill="#f2f2f4"/><rect x="672.5" y="46.5" width="20.5" height="20.5" fill="#f4f0e4"/><path d="M672.5 50.5h20.5M672.5 54h20.5M672.5 58h20.5M672.5 62h20.5M672.5 65.5h20.5" stroke="#c8c8cc" stroke-width="0.9"/><path d="M677.3 46.5v20.5M672.5 52.3h20.5" stroke="#3434a8" stroke-width="1.5"/><path d="M680.6 56.6h8l-2.6 2.6 4.6 4.6-2.6 2.6-4.6-4.6-2.8 2.8z" fill="#8a1aa8"/><rect x="714" y="43.3" width="26.6" height="27" fill="#a9adb6"/><rect x="714" y="69.3" width="26.6" height="1.2" fill="#f2f2f4"/><rect x="739.6" y="43.3" width="1.2" height="27" fill="#f2f2f4"/><path d="M719.2 47.6l15.6 6.2-6 2.6 6.6 7.2-3.4 3.2-6.6-7.4-3 5.8z" fill="#6a32c8" stroke="#fff" stroke-width="1.6" stroke-linejoin="round"/><path d="M755.5 57.5c-1.8-1.6-4-0.4-2.6 1.6l5.4 7.4c1.6 1.6 8 1.6 10 0.2 2.4-2.2 3.4-6.4 2.8-10.6-0.4-2.2-2.6-2.2-2.8-0.4l-0.2-4.4c-0.2-2-2.6-2-2.8 0l-0.2-2.8c-0.2-2-2.8-2-3 0v2c-0.4-2-2.8-1.8-2.8 0.2l0.2 9.800z" fill="#fff8ee" stroke="#e08a10" stroke-width="1.8" stroke-linejoin="round"/><path d="M803.200 46.400c2-1.600 6.400 2.400 4.800 4.600l-13.600 13-5.600 3.200 1.800-6.400z" fill="#fbdca4" stroke="#e8961a" stroke-width="1.800" stroke-linejoin="round"/><path d="M792.600 60.200l11.400-10.800" stroke="#fff4dc" stroke-width="1.600"/><path d="M788.400 67.400l1.400-4.200 2.800 2.600z" fill="#a86410"/><path d="M838.800 46.600c2-1.600 6.400 2.400 4.800 4.600l-11.400 11-5.200 1.400-2.800 3.400 1.400-5.200z" fill="#c8dcff" stroke="#2a62d8" stroke-width="1.800" stroke-linejoin="round"/><path d="M829.600 58.600l9.800-9.400" stroke="#f0f6ff" stroke-width="1.600"/><path d="M839.400 58l5.400 5.400-5.400 5.400-5.400-5.400z" fill="#1c2c7c"/><path d="M836.800 63.400h5.200M839.400 60.800v5.200" stroke="#c8dcff" stroke-width="0.900"/><rect x="870.8" y="47.500" width="20.800" height="20.500" fill="#eceae2"/><path d="M870.8 51h20.800M870.8 54.500h20.800M870.8 58h20.800M870.8 61.500h20.800M870.8 65h20.800" stroke="#d2d2d6" stroke-width="0.800"/><rect x="873.3" y="59" width="2.300" height="9" fill="#1c84f4"/><rect x="877.3" y="52" width="2.300" height="16" fill="#1c84f4"/><rect x="881.3" y="49" width="2.300" height="19" fill="#1c84f4"/><rect x="885.3" y="55" width="2.300" height="13" fill="#1c84f4"/><rect x="888.8" y="60" width="2.300" height="8" fill="#1c84f4"/><rect x="870.8" y="66.800" width="20.800" height="1.400" fill="#8a8a92"/><path d="M896 55.400h8.600l-4.300 5.200z" fill="#000"/><rect x="914.3" y="47.500" width="20.800" height="20.500" fill="#eceae2"/><path d="M914.3 51h20.800M914.3 54.500h20.800M914.3 58h20.800M914.3 61.500h20.800M914.3 65h20.800" stroke="#d2d2d6" stroke-width="0.800"/><rect x="916.8" y="59" width="2.300" height="9" fill="#1c84f4"/><rect x="920.8" y="52" width="2.300" height="16" fill="#1c84f4"/><rect x="924.8" y="49" width="2.300" height="19" fill="#1c84f4"/><rect x="928.8" y="55" width="2.300" height="13" fill="#1c84f4"/><rect x="932.3" y="60" width="2.300" height="8" fill="#1c84f4"/><rect x="914.3" y="66.800" width="20.800" height="1.400" fill="#8a8a92"/><path d="M916.500 49.500l16.500 16.500M933 49.500l-16.500 16.500" stroke="#f01818" stroke-width="2.200"/><path d="M967.400 49.800a8.400 8.400 0 1 0 9.200 13.600" fill="none" stroke="#2a8cf0" stroke-width="3.200"/><path d="M962.200 46.200l9.600 1.600-5.200 6.200z" fill="#1c74e0"/><text x="971.4" y="62" font-family="Liberation Sans" font-size="15.5" font-weight="bold" fill="#2074e8" textLength="9.2" lengthAdjust="spacingAndGlyphs">R</text><path d="M1966.400 66.400l9.400-9" stroke="#2a22ee" stroke-width="4.400" stroke-linecap="round"/><path d="M1985.800 53a6 6 0 1 1 -4.600-5.600" fill="none" stroke="#5c56f6" stroke-width="3" stroke-linecap="round"/><path d="M1976.200 56.400l2.400-2.400" stroke="#e4e4ff" stroke-width="2" stroke-linecap="round"/><defs><linearGradient id="bg" x1="0" y1="0" x2="0" y2="1"><stop offset="0" stop-color="#ffffff"/><stop offset="0.450" stop-color="#ececec"/><stop offset="1" stop-color="#c4c4c4"/></linearGradient></defs><rect x="1910.7" y="8.400" width="27.200" height="27.800" rx="4.500" fill="url(#bg)" stroke="#b2b2b2" stroke-width="1.400"/><rect x="1941.7" y="8.400" width="27.200" height="27.800" rx="4.500" fill="url(#bg)" stroke="#b2b2b2" stroke-width="1.400"/><rect x="1973.2" y="8.400" width="27.200" height="27.800" rx="4.500" fill="url(#bg)" stroke="#b2b2b2" stroke-width="1.400"/><rect x="1918.200" y="26" width="9.200" height="2.800" fill="#4a4a4a"/><rect x="1950.200" y="17.800" width="10.600" height="10.600" fill="none" stroke="#505050" stroke-width="1.800"/><rect x="1949.300" y="16.600" width="12.400" height="2.400" fill="#505050"/><path d="M1981.400 16.800l11.200 11.200M1992.600 16.800l-11.200 11.200" stroke="#505050" stroke-width="2.200"/><rect x="1877" y="12.800" width="15.600" height="19.600" fill="#f6f6f6" stroke="#7a7a7a" stroke-width="1.600"/><rect x="1876.200" y="12" width="17.200" height="2.400" fill="#8a8a8a"/><rect x="1883.400" y="17.800" width="14" height="10.400" fill="#f0f0f0" stroke="#5a5a5a" stroke-width="1.800"/><path d="M1883.400 21.400h14M1883.400 24.800h14M1888 17.800v10.400M1892.600 17.800v10.400" stroke="#9a9a9a" stroke-width="0.800"/><rect x="17" y="12" width="20" height="20.500" fill="#f2f2f4"/><path d="M16 11.600v21.800h21" fill="none" stroke="#8a8a8a" stroke-width="1.300"/><path d="M17 15.500h20M17 19h20M17 22.500h20M17 26h20M17 29.500h20" stroke="#dcdce0" stroke-width="0.800"/><rect x="20" y="20.500" width="3.400" height="10" rx="1.200" fill="#f40808"/><rect x="23" y="14" width="3.400" height="14" rx="1.200" fill="#0a84f0"/><rect x="26.500" y="13" width="3.400" height="11.500" rx="1.200" fill="#f40808"/><rect x="29.700" y="16" width="3.400" height="10.500" rx="1.200" fill="#0a84f0"/><rect x="32.600" y="14.500" width="3.400" height="13" rx="1.200" fill="#f40808"/></svg>
</body></html>
